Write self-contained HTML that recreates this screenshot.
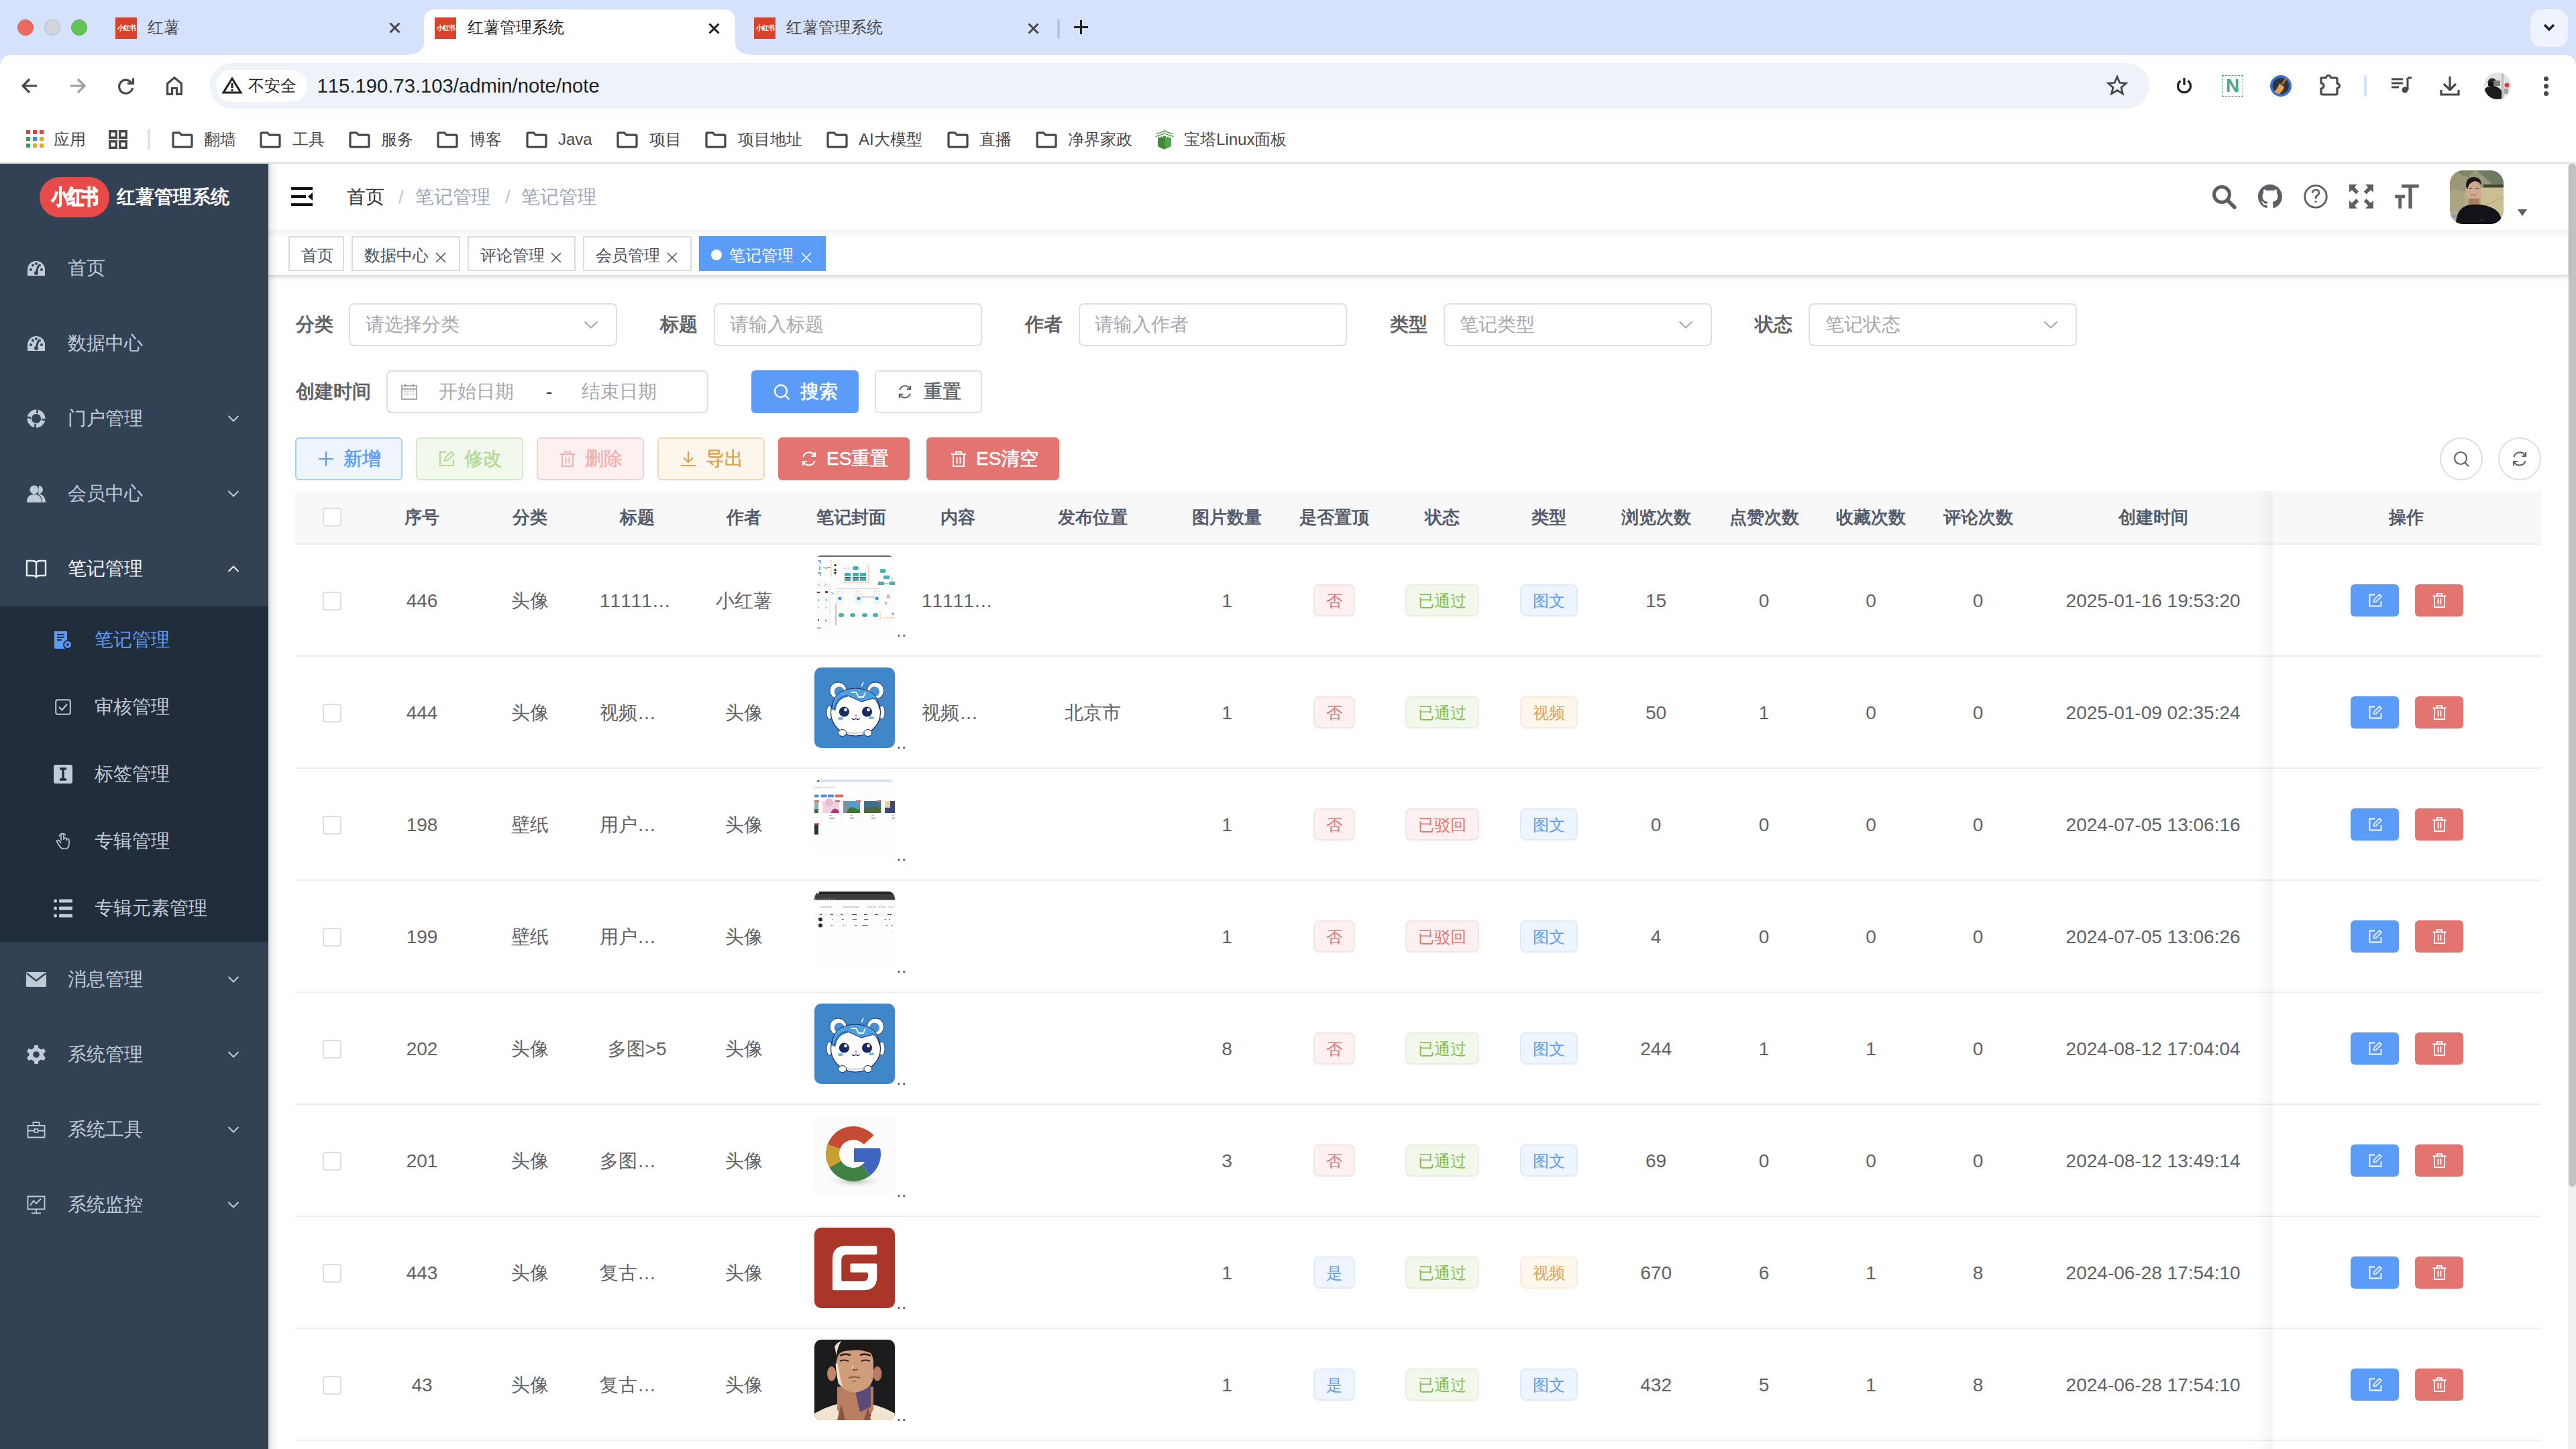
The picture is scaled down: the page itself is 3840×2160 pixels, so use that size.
<!DOCTYPE html><html><head><meta charset="utf-8"><style>
html,body{margin:0;padding:0}
body{width:3840px;height:2160px;overflow:hidden;position:relative;background:#fff;font-family:'Liberation Sans',sans-serif}
.t{position:absolute;white-space:nowrap;font-kerning:none}
.b{position:absolute;box-sizing:border-box}
svg.b{overflow:visible}
</style></head><body>
<div class="b" style="left:0px;top:0px;width:3840px;height:110px;background:#d6e2fb"></div><div class="b" style="left:26px;top:29px;width:24px;height:24px;border-radius:50%;background:#ee6a5f;border:1px solid #d9594f"></div><div class="b" style="left:66px;top:29px;width:24px;height:24px;border-radius:50%;background:#cfd4dd;border:1px solid #b9bec7"></div><div class="b" style="left:106px;top:29px;width:24px;height:24px;border-radius:50%;background:#61c454;border:1px solid #4fae43"></div><div class="b" style="left:172px;top:26px;width:32px;height:32px;background:#d9432b"></div><div class="t" style="left:172px;top:26px;width:32px;height:32px;line-height:32px;text-align:center;font-size:10px;font-weight:700;color:#fff;letter-spacing:-1px">小红书</div><div class="t" style="left:220px;top:5.0px;height:72px;line-height:72px;font-size:24px;color:#474747;font-weight:400;">红薯</div><svg class="b" style="left:579.5px;top:32.5px;" width="17" height="17" viewBox="0 0 17 17"><path d="M1.5 1.5L15.5 15.5M15.5 1.5L1.5 15.5" stroke="#474747" stroke-width="3.0" stroke-linecap="butt"/></svg><svg class="b" style="left:600px;top:14px" width="530" height="68" viewBox="0 0 530 68"><path d="M0 68 Q32 68 32 50 L32 18 Q32 0 50 0 L478 0 Q496 0 496 18 L496 50 Q496 68 528 68 Z" fill="#fff"/></svg><div class="b" style="left:648px;top:26px;width:32px;height:32px;background:#d9432b"></div><div class="t" style="left:648px;top:26px;width:32px;height:32px;line-height:32px;text-align:center;font-size:10px;font-weight:700;color:#fff;letter-spacing:-1px">小红书</div><div class="t" style="left:697px;top:5.0px;height:72px;line-height:72px;font-size:24px;color:#1f1f1f;font-weight:400;">红薯管理系统</div><svg class="b" style="left:1055.5px;top:33.5px;" width="17" height="17" viewBox="0 0 17 17"><path d="M1.5 1.5L15.5 15.5M15.5 1.5L1.5 15.5" stroke="#1f1f1f" stroke-width="3.0" stroke-linecap="butt"/></svg><div class="b" style="left:1124px;top:26px;width:32px;height:32px;background:#d9432b"></div><div class="t" style="left:1124px;top:26px;width:32px;height:32px;line-height:32px;text-align:center;font-size:10px;font-weight:700;color:#fff;letter-spacing:-1px">小红书</div><div class="t" style="left:1172px;top:5.0px;height:72px;line-height:72px;font-size:24px;color:#474747;font-weight:400;">红薯管理系统</div><svg class="b" style="left:1531.5px;top:33.5px;" width="17" height="17" viewBox="0 0 17 17"><path d="M1.5 1.5L15.5 15.5M15.5 1.5L1.5 15.5" stroke="#474747" stroke-width="3.0" stroke-linecap="butt"/></svg><div class="b" style="left:1576px;top:28px;width:4px;height:30px;background:#aec6f6;border-radius:2px"></div><svg class="b" style="left:1601px;top:30px;" width="21" height="21" viewBox="0 0 21 21"><path d="M10.5 0V21M0 10.5H21" stroke="#1f1f1f" stroke-width="3.0"/></svg><div class="b" style="left:3772px;top:14px;width:56px;height:56px;background:#eef3fd;border-radius:16px"></div><svg class="b" style="left:3791px;top:35px;" width="18" height="12" viewBox="0 0 18 12"><path d="M2 2L9 9L16 2" stroke="#1f1f1f" stroke-width="3.4" fill="none"/></svg><div class="b" style="left:0px;top:82px;width:3840px;height:162px;background:#fff;border-radius:16px 16px 0 0"></div><svg class="b" style="left:32px;top:116px;" width="24" height="24" viewBox="0 0 24 24"><path d="M23 12H3M12 2L2 12L12 22" stroke="#474747" stroke-width="3.2" fill="none"/></svg><svg class="b" style="left:104px;top:116px;" width="24" height="24" viewBox="0 0 24 24"><path d="M1 12H21M12 2L22 12L12 22" stroke="#a0a0a0" stroke-width="3.2" fill="none"/></svg><svg class="b" style="left:176px;top:116px;" width="24" height="24" viewBox="0 0 24 24"><path d="M20.5 8.5A10 10 0 1 0 21.5 15" stroke="#474747" stroke-width="3.2" fill="none"/><path d="M14 8.5H22.5V0.5" stroke="#474747" stroke-width="3.2" fill="none"/></svg><svg class="b" style="left:248px;top:114px;" width="24" height="28" viewBox="0 0 24 28"><path d="M1.6 26.4V10.5L12 1.8L22.4 10.5V26.4H15.5V17.5H8.5V26.4Z" stroke="#474747" stroke-width="3.2" fill="none" stroke-linejoin="miter"/></svg><div class="b" style="left:312px;top:94px;width:2892px;height:68px;background:#eef2f9;border-radius:34px"></div><div class="b" style="left:322px;top:104px;width:136px;height:48px;background:#fff;border-radius:24px"></div><svg class="b" style="left:331px;top:115px;" width="30" height="25" viewBox="0 0 30 25"><path d="M15 2L28 23H2Z" stroke="#1f1f1f" stroke-width="3" fill="none" stroke-linejoin="miter"/><path d="M15 9V16" stroke="#1f1f1f" stroke-width="3"/><circle cx="15" cy="19.5" r="1.7" fill="#1f1f1f"/></svg><div class="t" style="left:370px;top:92.0px;height:72px;line-height:72px;font-size:24px;color:#1f1f1f;font-weight:400;">不安全</div><div class="t" style="left:472.5px;top:84.5px;height:87px;line-height:87px;font-size:29.25px;color:#1f1f1f;font-weight:400;">115.190.73.103/admin/note/note</div><svg class="b" style="left:3140px;top:112px;" width="32" height="32" viewBox="0 0 32 32"><path d="M16 2.5L19.8 11.3L29.3 12.1L22.1 18.4L24.3 27.7L16 22.7L7.7 27.7L9.9 18.4L2.7 12.1L12.2 11.3Z" stroke="#474747" stroke-width="2.8" fill="none" stroke-linejoin="miter"/></svg><svg class="b" style="left:3244px;top:115px;" width="24" height="25" viewBox="0 0 24 25"><path d="M6.5 5.5A9.5 9.5 0 1 0 17.5 5.5" stroke="#1f1f1f" stroke-width="3.2" fill="none"/><path d="M12 1V12" stroke="#1f1f1f" stroke-width="3.2"/></svg><div class="b" style="left:3312px;top:112px;width:32px;height:32px;border:1.5px dashed #3f9b7a"></div><div class="t" style="left:3308.0px;width:40px;text-align:center;top:86.0px;height:84px;line-height:84px;font-size:28px;color:#47a882;font-weight:700;">N</div><svg class="b" style="left:3384px;top:112px;" width="32" height="32" viewBox="0 0 32 32"><circle cx="16" cy="16" r="16" fill="#3a6fd9"/><circle cx="16" cy="16" r="12.2" fill="#30343c"/><path d="M23.5 3.5L25.5 5L19 14.5L16.5 13Z" fill="#b8712e"/><path d="M14 12.5L21 17.5Q19 24 13 28.5L6.5 24.5Q10.5 21 14 12.5Z" fill="#e6a54c"/><path d="M9 25L15 19M11 27L17 21" stroke="#c78530" stroke-width="0.8"/></svg><svg class="b" style="left:3455px;top:110px;" width="34" height="34" viewBox="0 0 34 34"><path d="M5 6H12.5A3.5 3.5 0 0 1 19.5 6H27Q29 6 29 8V14.5A3.5 3.5 0 0 1 29 21.5V29Q29 31 27 31H7Q5 31 5 29V22A3 3 0 0 0 5 14Z" stroke="#474747" stroke-width="3.2" fill="none" stroke-linejoin="round"/></svg><div class="b" style="left:3524px;top:112px;width:4px;height:32px;background:#d6e2fb;border-radius:2px"></div><svg class="b" style="left:3564px;top:114px;" width="32" height="28" viewBox="0 0 32 28"><path d="M1 4H18M1 10H18M1 16H12" stroke="#474747" stroke-width="2.8"/><path d="M25 2V20" stroke="#474747" stroke-width="3"/><path d="M25 2H31" stroke="#474747" stroke-width="3"/><circle cx="21" cy="20" r="4.5" fill="#474747"/></svg><svg class="b" style="left:3636px;top:112px;" width="32" height="32" viewBox="0 0 32 32"><path d="M16 2V21M7 13L16 22L25 13" stroke="#474747" stroke-width="3.2" fill="none"/><path d="M3 22V29H29V22" stroke="#474747" stroke-width="3.2" fill="none"/></svg><svg class="b" style="left:3703px;top:108px;" width="40" height="40" viewBox="0 0 40 40"><defs><clipPath id="ca"><circle cx="20" cy="20" r="20"/></clipPath></defs><g clip-path="url(#ca)"><rect width="40" height="40" fill="#e4e2de"/><rect x="26" y="0" width="3" height="40" fill="#bdbab5"/><path d="M0 40V26Q4 20 12 20Q22 20 26 28V40Z" fill="#1c1c1e"/><circle cx="12" cy="15" r="6.5" fill="#2a2624"/><rect x="6" y="15" width="9" height="5" fill="#111"/><rect x="14" y="12" width="10" height="8" rx="1" fill="#7d7f80"/><circle cx="34" cy="19" r="3.5" fill="#e03a3a"/><rect x="30" y="24" width="6" height="8" fill="#a7a3a0"/></g></svg><div class="b" style="left:3792px;top:113.5px;width:7px;height:7px;border-radius:50%;background:#474747"></div><div class="b" style="left:3792px;top:124.5px;width:7px;height:7px;border-radius:50%;background:#474747"></div><div class="b" style="left:3792px;top:135.5px;width:7px;height:7px;border-radius:50%;background:#474747"></div><div class="b" style="left:0px;top:242px;width:3840px;height:2px;background:#e1e1e1"></div><div class="b" style="left:39px;top:194px;width:6px;height:6px;background:#e04335"></div><div class="b" style="left:49px;top:194px;width:6px;height:6px;background:#e04335"></div><div class="b" style="left:59px;top:194px;width:6px;height:6px;background:#e04335"></div><div class="b" style="left:39px;top:204px;width:6px;height:6px;background:#3a9b54"></div><div class="b" style="left:49px;top:204px;width:6px;height:6px;background:#4285f4"></div><div class="b" style="left:59px;top:204px;width:6px;height:6px;background:#e7a531"></div><div class="b" style="left:39px;top:214px;width:6px;height:6px;background:#3a9b54"></div><div class="b" style="left:49px;top:214px;width:6px;height:6px;background:#e7a531"></div><div class="b" style="left:59px;top:214px;width:6px;height:6px;background:#e7a531"></div><div class="t" style="left:80px;top:172.0px;height:72px;line-height:72px;font-size:24px;color:#474747;font-weight:400;">应用</div><svg class="b" style="left:162px;top:194px;" width="28" height="28" viewBox="0 0 28 28"><path d="M1.8 1.8H11.2V11.2H1.8ZM16.8 1.8H26.2V11.2H16.8ZM1.8 16.8H11.2V26.2H1.8ZM16.8 16.8H26.2V26.2H16.8Z" stroke="#474747" stroke-width="3.4" fill="none"/></svg><div class="b" style="left:220px;top:192px;width:4px;height:32px;background:#d6e2fb;border-radius:2px"></div><svg class="b" style="left:256px;top:196px;" width="32" height="25" viewBox="0 0 32 25"><path d="M2 3.5Q2 1.8 3.7 1.8H11.5L14.5 5.2H28.3Q30 5.2 30 6.9V21.5Q30 23.2 28.3 23.2H3.7Q2 23.2 2 21.5Z" stroke="#474747" stroke-width="3.2" fill="none" stroke-linejoin="round"/></svg><div class="t" style="left:304px;top:172.0px;height:72px;line-height:72px;font-size:24px;color:#474747;font-weight:400;">翻墙</div><svg class="b" style="left:387px;top:196px;" width="32" height="25" viewBox="0 0 32 25"><path d="M2 3.5Q2 1.8 3.7 1.8H11.5L14.5 5.2H28.3Q30 5.2 30 6.9V21.5Q30 23.2 28.3 23.2H3.7Q2 23.2 2 21.5Z" stroke="#474747" stroke-width="3.2" fill="none" stroke-linejoin="round"/></svg><div class="t" style="left:436px;top:172.0px;height:72px;line-height:72px;font-size:24px;color:#474747;font-weight:400;">工具</div><svg class="b" style="left:520px;top:196px;" width="32" height="25" viewBox="0 0 32 25"><path d="M2 3.5Q2 1.8 3.7 1.8H11.5L14.5 5.2H28.3Q30 5.2 30 6.9V21.5Q30 23.2 28.3 23.2H3.7Q2 23.2 2 21.5Z" stroke="#474747" stroke-width="3.2" fill="none" stroke-linejoin="round"/></svg><div class="t" style="left:568px;top:172.0px;height:72px;line-height:72px;font-size:24px;color:#474747;font-weight:400;">服务</div><svg class="b" style="left:651px;top:196px;" width="32" height="25" viewBox="0 0 32 25"><path d="M2 3.5Q2 1.8 3.7 1.8H11.5L14.5 5.2H28.3Q30 5.2 30 6.9V21.5Q30 23.2 28.3 23.2H3.7Q2 23.2 2 21.5Z" stroke="#474747" stroke-width="3.2" fill="none" stroke-linejoin="round"/></svg><div class="t" style="left:700px;top:172.0px;height:72px;line-height:72px;font-size:24px;color:#474747;font-weight:400;">博客</div><svg class="b" style="left:784px;top:196px;" width="32" height="25" viewBox="0 0 32 25"><path d="M2 3.5Q2 1.8 3.7 1.8H11.5L14.5 5.2H28.3Q30 5.2 30 6.9V21.5Q30 23.2 28.3 23.2H3.7Q2 23.2 2 21.5Z" stroke="#474747" stroke-width="3.2" fill="none" stroke-linejoin="round"/></svg><div class="t" style="left:832px;top:172.0px;height:72px;line-height:72px;font-size:24px;color:#474747;font-weight:400;">Java</div><svg class="b" style="left:919px;top:196px;" width="32" height="25" viewBox="0 0 32 25"><path d="M2 3.5Q2 1.8 3.7 1.8H11.5L14.5 5.2H28.3Q30 5.2 30 6.9V21.5Q30 23.2 28.3 23.2H3.7Q2 23.2 2 21.5Z" stroke="#474747" stroke-width="3.2" fill="none" stroke-linejoin="round"/></svg><div class="t" style="left:968px;top:172.0px;height:72px;line-height:72px;font-size:24px;color:#474747;font-weight:400;">项目</div><svg class="b" style="left:1051px;top:196px;" width="32" height="25" viewBox="0 0 32 25"><path d="M2 3.5Q2 1.8 3.7 1.8H11.5L14.5 5.2H28.3Q30 5.2 30 6.9V21.5Q30 23.2 28.3 23.2H3.7Q2 23.2 2 21.5Z" stroke="#474747" stroke-width="3.2" fill="none" stroke-linejoin="round"/></svg><div class="t" style="left:1100px;top:172.0px;height:72px;line-height:72px;font-size:24px;color:#474747;font-weight:400;">项目地址</div><svg class="b" style="left:1232px;top:196px;" width="32" height="25" viewBox="0 0 32 25"><path d="M2 3.5Q2 1.8 3.7 1.8H11.5L14.5 5.2H28.3Q30 5.2 30 6.9V21.5Q30 23.2 28.3 23.2H3.7Q2 23.2 2 21.5Z" stroke="#474747" stroke-width="3.2" fill="none" stroke-linejoin="round"/></svg><div class="t" style="left:1280px;top:172.0px;height:72px;line-height:72px;font-size:24px;color:#474747;font-weight:400;">AI大模型</div><svg class="b" style="left:1412px;top:196px;" width="32" height="25" viewBox="0 0 32 25"><path d="M2 3.5Q2 1.8 3.7 1.8H11.5L14.5 5.2H28.3Q30 5.2 30 6.9V21.5Q30 23.2 28.3 23.2H3.7Q2 23.2 2 21.5Z" stroke="#474747" stroke-width="3.2" fill="none" stroke-linejoin="round"/></svg><div class="t" style="left:1460px;top:172.0px;height:72px;line-height:72px;font-size:24px;color:#474747;font-weight:400;">直播</div><svg class="b" style="left:1544px;top:196px;" width="32" height="25" viewBox="0 0 32 25"><path d="M2 3.5Q2 1.8 3.7 1.8H11.5L14.5 5.2H28.3Q30 5.2 30 6.9V21.5Q30 23.2 28.3 23.2H3.7Q2 23.2 2 21.5Z" stroke="#474747" stroke-width="3.2" fill="none" stroke-linejoin="round"/></svg><div class="t" style="left:1592px;top:172.0px;height:72px;line-height:72px;font-size:24px;color:#474747;font-weight:400;">净界家政</div><svg class="b" style="left:1722px;top:192px;" width="28" height="32" viewBox="0 0 28 32"><path d="M4.2 13L6 12.2V13.4H8V11.8H10V12.8H12V10.8H16V12.8H18V11.8H20V13.4H22V12.2L23.9 13V25Q23.9 27.5 14 30.4Q4.2 27.5 4.2 25Z" fill="#52a44a"/><path d="M4.2 13L6 12.2V13.4H8V11.8H10V12.8H12V10.8H14V30.4Q4.2 27.5 4.2 25Z" fill="#3f8636"/><path d="M1.6 7.6L14 3.6L26.4 7.6M0.6 11.6L14 7.2L27.4 11.6M14 1V3.6" stroke="#4a9a42" stroke-width="1.4" fill="none"/></svg><div class="t" style="left:1765px;top:172.0px;height:72px;line-height:72px;font-size:24px;color:#474747;font-weight:400;">宝塔Linux面板</div><div class="b" style="left:0;top:0;width:3840px;height:2160px;z-index:0"><div class="t" style="left:441px;top:442.0px;height:84px;line-height:84px;font-size:28px;color:#606266;font-weight:700;">分类</div><div class="b" style="left:520px;top:452px;width:400px;height:64px;border:2px solid #dddfe5;border-radius:8px;background:#fff"></div><div class="t" style="left:545px;top:442.0px;height:84px;line-height:84px;font-size:28px;color:#a6a9b0;font-weight:400;">请选择分类</div><svg class="b" style="left:870px;top:478px;" width="22" height="12" viewBox="0 0 22 12"><path d="M1.5 1.5L11 10.5L20.5 1.5" stroke="#a6a9b0" stroke-width="2.2" fill="none"/></svg><div class="t" style="left:984px;top:442.0px;height:84px;line-height:84px;font-size:28px;color:#606266;font-weight:700;">标题</div><div class="b" style="left:1064px;top:452px;width:400px;height:64px;border:2px solid #dddfe5;border-radius:8px;background:#fff"></div><div class="t" style="left:1088px;top:442.0px;height:84px;line-height:84px;font-size:28px;color:#a6a9b0;font-weight:400;">请输入标题</div><div class="t" style="left:1528px;top:442.0px;height:84px;line-height:84px;font-size:28px;color:#606266;font-weight:700;">作者</div><div class="b" style="left:1608px;top:452px;width:400px;height:64px;border:2px solid #dddfe5;border-radius:8px;background:#fff"></div><div class="t" style="left:1632px;top:442.0px;height:84px;line-height:84px;font-size:28px;color:#a6a9b0;font-weight:400;">请输入作者</div><div class="t" style="left:2072px;top:442.0px;height:84px;line-height:84px;font-size:28px;color:#606266;font-weight:700;">类型</div><div class="b" style="left:2152px;top:452px;width:400px;height:64px;border:2px solid #dddfe5;border-radius:8px;background:#fff"></div><div class="t" style="left:2176px;top:442.0px;height:84px;line-height:84px;font-size:28px;color:#a6a9b0;font-weight:400;">笔记类型</div><svg class="b" style="left:2502px;top:478px;" width="22" height="12" viewBox="0 0 22 12"><path d="M1.5 1.5L11 10.5L20.5 1.5" stroke="#a6a9b0" stroke-width="2.2" fill="none"/></svg><div class="t" style="left:2616px;top:442.0px;height:84px;line-height:84px;font-size:28px;color:#606266;font-weight:700;">状态</div><div class="b" style="left:2696px;top:452px;width:400px;height:64px;border:2px solid #dddfe5;border-radius:8px;background:#fff"></div><div class="t" style="left:2721px;top:442.0px;height:84px;line-height:84px;font-size:28px;color:#a6a9b0;font-weight:400;">笔记状态</div><svg class="b" style="left:3046px;top:478px;" width="22" height="12" viewBox="0 0 22 12"><path d="M1.5 1.5L11 10.5L20.5 1.5" stroke="#a6a9b0" stroke-width="2.2" fill="none"/></svg><div class="t" style="left:441px;top:542.0px;height:84px;line-height:84px;font-size:28px;color:#606266;font-weight:700;">创建时间</div><div class="b" style="left:576px;top:552px;width:480px;height:64px;border:2px solid #dddfe5;border-radius:8px;background:#fff"></div><svg class="b" style="left:598px;top:572px;" width="24" height="24" viewBox="0 0 24 24"><rect x="1" y="3" width="22" height="20" stroke="#a6a9b0" stroke-width="2" fill="none"/><path d="M1 8H23M6 0V5M18 0V5" stroke="#a6a9b0" stroke-width="2"/><path d="M5 12H7M9 12H11M13 12H15M17 12H19M5 16H7M9 16H11M13 16H15M17 16H19" stroke="#a6a9b0" stroke-width="1.6"/></svg><div class="t" style="left:654px;top:542.0px;height:84px;line-height:84px;font-size:28px;color:#a6a9b0;font-weight:400;">开始日期</div><div class="t" style="left:814px;top:542.0px;height:84px;line-height:84px;font-size:28px;color:#303133;font-weight:400;">-</div><div class="t" style="left:867px;top:542.0px;height:84px;line-height:84px;font-size:28px;color:#a6a9b0;font-weight:400;">结束日期</div><div class="b" style="left:1120px;top:552px;width:160px;height:64px;background:#5a9cf8;border-radius:6px"></div><svg class="b" style="left:1153px;top:572px;" width="25" height="25" viewBox="0 0 25 25"><circle cx="11" cy="11" r="9" stroke="#fff" stroke-width="2.4" fill="none"/><path d="M17.5 17.5L23.5 23.5" stroke="#fff" stroke-width="2.4"/></svg><div class="t" style="left:1193px;top:542.0px;height:84px;line-height:84px;font-size:28px;color:#fff;font-weight:400;-webkit-text-stroke:0.6px #fff">搜索</div><div class="b" style="left:1304px;top:552px;width:160px;height:64px;border:2px solid #dddfe5;border-radius:6px;background:#fff"></div><svg class="b" style="left:1338px;top:573px;" width="22" height="22" viewBox="0 0 24 24"><path d="M3.5 9A9 9 0 0 1 20 7" stroke="#606266" stroke-width="2.2" fill="none"/><path d="M20.5 15A9 9 0 0 1 4 17" stroke="#606266" stroke-width="2.2" fill="none"/><path d="M21 2V8H15" stroke="#606266" stroke-width="2.2" fill="none"/><path d="M3 22V16H9" stroke="#606266" stroke-width="2.2" fill="none"/></svg><div class="t" style="left:1377px;top:542.0px;height:84px;line-height:84px;font-size:28px;color:#606266;font-weight:400;-webkit-text-stroke:0.6px #606266">重置</div><div class="b" style="left:440px;top:652px;width:160px;height:64px;background:#eef5fe;border:2px solid #aacefb;border-radius:6px"></div><svg class="b" style="left:474px;top:672px;" width="24" height="24" viewBox="0 0 24 24"><path d="M12 1V23M1 12H23" stroke="#5a9cf8" stroke-width="2.2"/></svg><div class="t" style="left:512px;top:642.0px;height:84px;line-height:84px;font-size:28px;color:#5a9cf8;font-weight:400;-webkit-text-stroke:0.6px #5a9cf8">新增</div><div class="b" style="left:620px;top:652px;width:160px;height:64px;background:#f2f9ec;border:2px solid #d1ebc4;border-radius:6px"></div><svg class="b" style="left:654px;top:672px;" width="24" height="24" viewBox="0 0 24 24"><path d="M11 2H2V22H22V13" stroke="#b4da99" stroke-width="2.2" fill="none"/><path d="M9 15L10 10L19 1.5L22.5 5L14 14Z" stroke="#b4da99" stroke-width="2" fill="none"/></svg><div class="t" style="left:692px;top:642.0px;height:84px;line-height:84px;font-size:28px;color:#b4da99;font-weight:400;-webkit-text-stroke:0.6px #b4da99">修改</div><div class="b" style="left:800px;top:652px;width:160px;height:64px;background:#fcf0f0;border:2px solid #f5d3d2;border-radius:6px"></div><svg class="b" style="left:834px;top:672px;" width="24" height="24" viewBox="0 0 24 24"><path d="M1 5H23M8 5V1.5H16V5M4 5V23H20V5M9.5 9V19M14.5 9V19" stroke="#efb4b2" stroke-width="2" fill="none"/></svg><div class="t" style="left:872px;top:642.0px;height:84px;line-height:84px;font-size:28px;color:#efb4b2;font-weight:400;-webkit-text-stroke:0.6px #efb4b2">删除</div><div class="b" style="left:980px;top:652px;width:160px;height:64px;background:#fcf6ed;border:2px solid #f0d8b5;border-radius:6px"></div><svg class="b" style="left:1014px;top:672px;" width="24" height="24" viewBox="0 0 24 24"><path d="M12 1V17M5 10L12 17L19 10M1 22H23" stroke="#dca550" stroke-width="2.2" fill="none"/></svg><div class="t" style="left:1052px;top:642.0px;height:84px;line-height:84px;font-size:28px;color:#dca550;font-weight:400;-webkit-text-stroke:0.6px #dca550">导出</div><div class="b" style="left:1160px;top:652px;width:196px;height:64px;background:#e47470;border:2px solid #e47470;border-radius:6px"></div><svg class="b" style="left:1194px;top:672px;" width="24" height="24" viewBox="0 0 24 24"><path d="M3.5 9A9 9 0 0 1 20 7" stroke="#fff" stroke-width="2.2" fill="none"/><path d="M20.5 15A9 9 0 0 1 4 17" stroke="#fff" stroke-width="2.2" fill="none"/><path d="M21 2V8H15" stroke="#fff" stroke-width="2.2" fill="none"/><path d="M3 22V16H9" stroke="#fff" stroke-width="2.2" fill="none"/></svg><div class="t" style="left:1232px;top:642.0px;height:84px;line-height:84px;font-size:28px;color:#fff;font-weight:400;-webkit-text-stroke:0.6px #fff">ES重置</div><div class="b" style="left:1381px;top:652px;width:198px;height:64px;background:#e47470;border:2px solid #e47470;border-radius:6px"></div><svg class="b" style="left:1417px;top:672px;" width="24" height="24" viewBox="0 0 24 24"><path d="M1 5H23M8 5V1.5H16V5M4 5V23H20V5M9.5 9V19M14.5 9V19" stroke="#fff" stroke-width="2" fill="none"/></svg><div class="t" style="left:1455px;top:642.0px;height:84px;line-height:84px;font-size:28px;color:#fff;font-weight:400;-webkit-text-stroke:0.6px #fff">ES清空</div><div class="b" style="left:3637px;top:652px;width:64px;height:64px;border:2px solid #dddfe5;border-radius:50%;background:#fff"></div><svg class="b" style="left:3657px;top:672px;" width="24" height="24" viewBox="0 0 24 24"><circle cx="11" cy="11" r="9" stroke="#606266" stroke-width="2.2" fill="none"/><path d="M17.5 17.5L23 23" stroke="#606266" stroke-width="2.2"/></svg><div class="b" style="left:3724px;top:652px;width:64px;height:64px;border:2px solid #dddfe5;border-radius:50%;background:#fff"></div><svg class="b" style="left:3744px;top:672px;" width="24" height="24" viewBox="0 0 24 24"><path d="M3.5 9A9 9 0 0 1 20 7" stroke="#606266" stroke-width="2.2" fill="none"/><path d="M20.5 15A9 9 0 0 1 4 17" stroke="#606266" stroke-width="2.2" fill="none"/><path d="M21 2V8H15" stroke="#606266" stroke-width="2.2" fill="none"/><path d="M3 22V16H9" stroke="#606266" stroke-width="2.2" fill="none"/></svg><div class="b" style="left:440px;top:732px;width:3348px;height:80px;background:#f8f8f9;border-bottom:2px solid #eceef4"></div><div class="b" style="left:481px;top:757px;width:28px;height:28px;border:2px solid #dddfe5;border-radius:4px;background:#fff"></div><div class="t" style="left:479.0px;width:300px;text-align:center;top:732.0px;height:78px;line-height:78px;font-size:26px;color:#535a6c;font-weight:700;">序号</div><div class="t" style="left:640.0px;width:300px;text-align:center;top:732.0px;height:78px;line-height:78px;font-size:26px;color:#535a6c;font-weight:700;">分类</div><div class="t" style="left:799.6px;width:300px;text-align:center;top:732.0px;height:78px;line-height:78px;font-size:26px;color:#535a6c;font-weight:700;">标题</div><div class="t" style="left:959.0px;width:300px;text-align:center;top:732.0px;height:78px;line-height:78px;font-size:26px;color:#535a6c;font-weight:700;">作者</div><div class="t" style="left:1118.6px;width:300px;text-align:center;top:732.0px;height:78px;line-height:78px;font-size:26px;color:#535a6c;font-weight:700;">笔记封面</div><div class="t" style="left:1278.0px;width:300px;text-align:center;top:732.0px;height:78px;line-height:78px;font-size:26px;color:#535a6c;font-weight:700;">内容</div><div class="t" style="left:1479.0px;width:300px;text-align:center;top:732.0px;height:78px;line-height:78px;font-size:26px;color:#535a6c;font-weight:700;">发布位置</div><div class="t" style="left:1679.0px;width:300px;text-align:center;top:732.0px;height:78px;line-height:78px;font-size:26px;color:#535a6c;font-weight:700;">图片数量</div><div class="t" style="left:1838.6px;width:300px;text-align:center;top:732.0px;height:78px;line-height:78px;font-size:26px;color:#535a6c;font-weight:700;">是否置顶</div><div class="t" style="left:1999.6px;width:300px;text-align:center;top:732.0px;height:78px;line-height:78px;font-size:26px;color:#535a6c;font-weight:700;">状态</div><div class="t" style="left:2159.0px;width:300px;text-align:center;top:732.0px;height:78px;line-height:78px;font-size:26px;color:#535a6c;font-weight:700;">类型</div><div class="t" style="left:2318.6px;width:300px;text-align:center;top:732.0px;height:78px;line-height:78px;font-size:26px;color:#535a6c;font-weight:700;">浏览次数</div><div class="t" style="left:2479.6px;width:300px;text-align:center;top:732.0px;height:78px;line-height:78px;font-size:26px;color:#535a6c;font-weight:700;">点赞次数</div><div class="t" style="left:2639.0px;width:300px;text-align:center;top:732.0px;height:78px;line-height:78px;font-size:26px;color:#535a6c;font-weight:700;">收藏次数</div><div class="t" style="left:2798.6px;width:300px;text-align:center;top:732.0px;height:78px;line-height:78px;font-size:26px;color:#535a6c;font-weight:700;">评论次数</div><div class="t" style="left:3059.6px;width:300px;text-align:center;top:732.0px;height:78px;line-height:78px;font-size:26px;color:#535a6c;font-weight:700;">创建时间</div><div class="t" style="left:3436.6px;width:300px;text-align:center;top:732.0px;height:78px;line-height:78px;font-size:26px;color:#535a6c;font-weight:700;">操作</div><div class="b" style="left:440px;top:977px;width:3348px;height:2px;background:#eceef4"></div><div class="b" style="left:481px;top:882px;width:28px;height:28px;border:2px solid #dddfe5;border-radius:4px;background:#fff"></div><div class="t" style="left:429.0px;width:400px;text-align:center;top:854.0px;height:84px;line-height:84px;font-size:28px;color:#606266;font-weight:400;">446</div><div class="t" style="left:590.0px;width:400px;text-align:center;top:854.0px;height:84px;line-height:84px;font-size:28px;color:#606266;font-weight:400;">头像</div><div class="t" style="left:894px;top:854.0px;height:84px;line-height:84px;font-size:28px;color:#606266;font-weight:400;">11111…</div><div class="t" style="left:909.0px;width:400px;text-align:center;top:854.0px;height:84px;line-height:84px;font-size:28px;color:#606266;font-weight:400;">小红薯</div><svg class="b" style="left:1214px;top:828px" width="120" height="120" viewBox="0 0 120 120"><defs><clipPath id="th1"><rect width="120" height="120" rx="10"/></clipPath></defs><g clip-path="url(#th1)"><rect width="120" height="120" fill="#fdfdfd"/><path d="M4 1H116" stroke="#333" stroke-width="1.6"/><path d="M5 8H9V12M8 16V22M5 26H9V30" stroke="#3a8ee6" stroke-width="1.4" fill="none"/><path d="M25 7V32" stroke="#e8a050" stroke-width="1" stroke-dasharray="2 1.5"/><path d="M31 12L33 16H29Z M31 19L33 23H29Z M29 25H33L31 29Z" fill="#222"/><path d="M12 18H24M16 20L24 17" stroke="#555" stroke-width="0.6"/><path d="M44 19H52" stroke="#9b59f0" stroke-width="0.8" stroke-dasharray="1 1"/><ellipse cx="61.5" cy="19" rx="4.5" ry="3.2" fill="#45b0b0"/><rect x="45" y="26" width="9" height="5" fill="#45b0b0"/><rect x="57" y="26" width="9" height="5" fill="#45b0b0"/><rect x="68" y="26" width="9" height="5" fill="#45b0b0"/><rect x="45" y="32" width="9" height="1.3" fill="#333"/><rect x="57" y="32" width="9" height="1.3" fill="#333"/><rect x="68" y="32" width="9" height="1.3" fill="#333"/><rect x="45" y="33.5" width="9" height="4.5" fill="#45b0b0"/><rect x="57" y="33.5" width="9" height="4.5" fill="#45b0b0"/><rect x="68" y="33.5" width="9" height="4.5" fill="#45b0b0"/><path d="M43 40H81V14" stroke="#e8852a" stroke-width="1" stroke-dasharray="2 1.2" fill="none"/><ellipse cx="102" cy="23" rx="4.5" ry="3.2" fill="#45b0b0"/><rect x="103" y="30" width="9" height="5" fill="#45b0b0"/><rect x="95" y="39" width="9" height="5" fill="#45b0b0"/><rect x="112" y="39" width="8" height="5" fill="#45b0b0"/><path d="M104 41.5H112M116 39V32" stroke="#5ed05e" stroke-width="0.8"/><path d="M32 49.5H99" stroke="#f0b080" stroke-width="0.6"/><path d="M34 53H42V71H34Z M62 53H70V71H62Z M89 53H97V71H89Z" stroke="#7ee07e" stroke-width="0.7" stroke-dasharray="1.5 1" fill="none"/><circle cx="38" cy="64" r="2.6" fill="#3a8ee6"/><circle cx="66" cy="64" r="2.6" fill="#3a8ee6"/><circle cx="93" cy="64" r="2.6" fill="#3a8ee6"/><path d="M70 62H89" stroke="#666" stroke-width="0.5"/><path d="M23 40V104" stroke="#7ee07e" stroke-width="0.7" stroke-dasharray="1.5 1"/><path d="M4 46H22M4 63H22M4 93H22" stroke="#c8f0c8" stroke-width="0.6" stroke-dasharray="1 1"/><path d="M5 42L8 45M8 42L5 45M15 42L18 45M18 42L15 45" stroke="#e8852a" stroke-width="0.9"/><rect x="4" y="54" width="4" height="2" fill="#a02020"/><rect x="16" y="53" width="4" height="3" fill="#b03030"/><path d="M5 65L7 68M17 65L19 68" stroke="#3a8ee6" stroke-width="1.2"/><path d="M6 76V79M17 76V79" stroke="#4aa8e0" stroke-width="0.9"/><rect x="5" y="95" width="2" height="3" fill="#2a6fd0"/><path d="M18 95L16 97L18 99" stroke="#d02070" stroke-width="0.9" fill="none"/><path d="M4 108H10" stroke="#333" stroke-width="0.7"/><path d="M32 72V104M25 55L30 58" stroke="#444" stroke-width="0.6"/><ellipse cx="40" cy="89" rx="4" ry="3" fill="#45b0b0"/><ellipse cx="57" cy="89" rx="4" ry="3" fill="#45b0b0"/><ellipse cx="75" cy="89" rx="4" ry="3" fill="#45b0b0"/><ellipse cx="91" cy="89" rx="4" ry="3" fill="#45b0b0"/><path d="M98 84V96M103 93H120" stroke="#e8852a" stroke-width="0.8" stroke-dasharray="1.5 1"/><circle cx="110" cy="61" r="1.8" stroke="#e03030" stroke-width="0.8" fill="none"/><path d="M105 69L108 73M108 69L105 73" stroke="#3a8ee6" stroke-width="0.9"/><path d="M117 85L119 88H115Z" fill="#2a6fd0"/></g></svg><div class="t" style="left:1336px;top:898.0px;height:84px;line-height:84px;font-size:28px;color:#606266;font-weight:400;">..</div><div class="t" style="left:1374px;top:854.0px;height:84px;line-height:84px;font-size:28px;color:#606266;font-weight:400;">11111…</div><div class="t" style="left:1629.0px;width:400px;text-align:center;top:854.0px;height:84px;line-height:84px;font-size:28px;color:#606266;font-weight:400;">1</div><div class="b" style="left:1957.6px;top:871px;width:62px;height:48px;background:#fcf0f0;border:2px solid #f9e3e2;border-radius:8px"></div><div class="t" style="left:1888.6px;width:200px;text-align:center;top:859.5px;height:72px;line-height:72px;font-size:24px;color:#e47470;font-weight:400;">否</div><div class="b" style="left:2094.6px;top:871px;width:110px;height:48px;background:#f2f9ec;border:2px solid #e4f2da;border-radius:8px"></div><div class="t" style="left:2049.6px;width:200px;text-align:center;top:859.5px;height:72px;line-height:72px;font-size:24px;color:#7ec050;font-weight:400;">已通过</div><div class="b" style="left:2266.0px;top:871px;width:86px;height:48px;background:#eef5fe;border:2px solid #ddebfd;border-radius:8px"></div><div class="t" style="left:2209.0px;width:200px;text-align:center;top:859.5px;height:72px;line-height:72px;font-size:24px;color:#5a9cf8;font-weight:400;">图文</div><div class="t" style="left:2268.6px;width:400px;text-align:center;top:854.0px;height:84px;line-height:84px;font-size:28px;color:#606266;font-weight:400;">15</div><div class="t" style="left:2429.6px;width:400px;text-align:center;top:854.0px;height:84px;line-height:84px;font-size:28px;color:#606266;font-weight:400;">0</div><div class="t" style="left:2589.0px;width:400px;text-align:center;top:854.0px;height:84px;line-height:84px;font-size:28px;color:#606266;font-weight:400;">0</div><div class="t" style="left:2748.6px;width:400px;text-align:center;top:854.0px;height:84px;line-height:84px;font-size:28px;color:#606266;font-weight:400;">0</div><div class="t" style="left:3009.6px;width:400px;text-align:center;top:854.0px;height:84px;line-height:84px;font-size:28px;color:#606266;font-weight:400;">2025-01-16 19:53:20</div><div class="b" style="left:3504px;top:871px;width:72px;height:48px;background:#5a9cf8;border-radius:6px"></div><svg class="b" style="left:3530.5px;top:885px;" width="20" height="20" viewBox="0 0 20 20"><path d="M9 1.5H1.5V18.5H18.5V11" stroke="#fff" stroke-width="1.8" fill="none"/><path d="M7.5 12.5L8 9L16 1L19 4L11 12Z" stroke="#fff" stroke-width="1.6" fill="none" stroke-linejoin="round"/></svg><div class="b" style="left:3600px;top:871px;width:72px;height:48px;background:#e47470;border-radius:6px"></div><svg class="b" style="left:3625.5px;top:883.5px;" width="21" height="22" viewBox="0 0 21 22"><path d="M0.5 4.5H20.5M7 4.5V1H14V4.5M3 4.5V21H18V4.5M8.5 8V17M12.5 8V17" stroke="#fff" stroke-width="1.8" fill="none"/></svg><div class="b" style="left:440px;top:1144px;width:3348px;height:2px;background:#eceef4"></div><div class="b" style="left:481px;top:1049px;width:28px;height:28px;border:2px solid #dddfe5;border-radius:4px;background:#fff"></div><div class="t" style="left:429.0px;width:400px;text-align:center;top:1021.0px;height:84px;line-height:84px;font-size:28px;color:#606266;font-weight:400;">444</div><div class="t" style="left:590.0px;width:400px;text-align:center;top:1021.0px;height:84px;line-height:84px;font-size:28px;color:#606266;font-weight:400;">头像</div><div class="t" style="left:894px;top:1021.0px;height:84px;line-height:84px;font-size:28px;color:#606266;font-weight:400;">视频…</div><div class="t" style="left:909.0px;width:400px;text-align:center;top:1021.0px;height:84px;line-height:84px;font-size:28px;color:#606266;font-weight:400;">头像</div><svg class="b" style="left:1214px;top:995px" width="120" height="120" viewBox="0 0 120 120"><defs><clipPath id="th2"><rect width="120" height="120" rx="10"/></clipPath></defs><g clip-path="url(#th2)"><rect width="120" height="120" fill="#3f87c9"/><circle cx="35.4" cy="34.5" r="12.6" fill="#fff" stroke="#1b2a5e" stroke-width="1"/><circle cx="91" cy="34.5" r="12.6" fill="#fff" stroke="#1b2a5e" stroke-width="1"/><circle cx="37" cy="36" r="7.5" fill="#4a8fd0"/><circle cx="89.5" cy="36" r="7.5" fill="#4a8fd0"/><ellipse cx="22.5" cy="67" rx="4.5" ry="10" fill="#fff" stroke="#1b2a5e" stroke-width="0.8"/><ellipse cx="100.5" cy="67" rx="4.5" ry="10" fill="#fff" stroke="#1b2a5e" stroke-width="0.8"/><ellipse cx="61.5" cy="67" rx="37" ry="35" fill="#fff" stroke="#1b2a5e" stroke-width="1.2"/><path d="M26 62Q27 32 61.5 31Q96 32 97 62Q95 50 88 46L70 51L50 42Q34 46 30 62Z" fill="#4e9ee0" stroke="#1b2a5e" stroke-width="1"/><path d="M30 64Q33 44 50 42" stroke="#2f6fb8" stroke-width="3" fill="none"/><path d="M55 37L62 37L66 44L73 44L76 37" stroke="#fff" stroke-width="1.8" fill="none"/><path d="M70 28L73 22" stroke="#fff" stroke-width="1.5"/><circle cx="44.4" cy="66" r="7.6" fill="#1b2a5e"/><circle cx="78.5" cy="66" r="7.6" fill="#1b2a5e"/><circle cx="46.5" cy="63" r="2.4" fill="#fff"/><circle cx="80.5" cy="63" r="2.4" fill="#fff"/><path d="M59.5 70.5H64.5L62 73.5Z" fill="#e8776c"/><path d="M56 76Q58.5 79 61.8 76Q65 79 67.7 76" stroke="#1b2a5e" stroke-width="1.2" fill="none"/><ellipse cx="39" cy="76" rx="4" ry="2" fill="#6fb3ea"/><ellipse cx="84.8" cy="75" rx="4" ry="2" fill="#6fb3ea"/><path d="M42 94Q61 102 81 94" stroke="#c8d4e4" stroke-width="2" fill="none"/><ellipse cx="41.7" cy="97.5" rx="6" ry="5" fill="#fff" stroke="#1b2a5e" stroke-width="1"/><ellipse cx="79.8" cy="97.5" rx="6" ry="5" fill="#fff" stroke="#1b2a5e" stroke-width="1"/></g></svg><div class="t" style="left:1336px;top:1065.0px;height:84px;line-height:84px;font-size:28px;color:#606266;font-weight:400;">..</div><div class="t" style="left:1374px;top:1021.0px;height:84px;line-height:84px;font-size:28px;color:#606266;font-weight:400;">视频…</div><div class="t" style="left:1429.0px;width:400px;text-align:center;top:1021.0px;height:84px;line-height:84px;font-size:28px;color:#606266;font-weight:400;">北京市</div><div class="t" style="left:1629.0px;width:400px;text-align:center;top:1021.0px;height:84px;line-height:84px;font-size:28px;color:#606266;font-weight:400;">1</div><div class="b" style="left:1957.6px;top:1038px;width:62px;height:48px;background:#fcf0f0;border:2px solid #f9e3e2;border-radius:8px"></div><div class="t" style="left:1888.6px;width:200px;text-align:center;top:1026.5px;height:72px;line-height:72px;font-size:24px;color:#e47470;font-weight:400;">否</div><div class="b" style="left:2094.6px;top:1038px;width:110px;height:48px;background:#f2f9ec;border:2px solid #e4f2da;border-radius:8px"></div><div class="t" style="left:2049.6px;width:200px;text-align:center;top:1026.5px;height:72px;line-height:72px;font-size:24px;color:#7ec050;font-weight:400;">已通过</div><div class="b" style="left:2266.0px;top:1038px;width:86px;height:48px;background:#fcf6ed;border:2px solid #f8ecda;border-radius:8px"></div><div class="t" style="left:2209.0px;width:200px;text-align:center;top:1026.5px;height:72px;line-height:72px;font-size:24px;color:#dca550;font-weight:400;">视频</div><div class="t" style="left:2268.6px;width:400px;text-align:center;top:1021.0px;height:84px;line-height:84px;font-size:28px;color:#606266;font-weight:400;">50</div><div class="t" style="left:2429.6px;width:400px;text-align:center;top:1021.0px;height:84px;line-height:84px;font-size:28px;color:#606266;font-weight:400;">1</div><div class="t" style="left:2589.0px;width:400px;text-align:center;top:1021.0px;height:84px;line-height:84px;font-size:28px;color:#606266;font-weight:400;">0</div><div class="t" style="left:2748.6px;width:400px;text-align:center;top:1021.0px;height:84px;line-height:84px;font-size:28px;color:#606266;font-weight:400;">0</div><div class="t" style="left:3009.6px;width:400px;text-align:center;top:1021.0px;height:84px;line-height:84px;font-size:28px;color:#606266;font-weight:400;">2025-01-09 02:35:24</div><div class="b" style="left:3504px;top:1038px;width:72px;height:48px;background:#5a9cf8;border-radius:6px"></div><svg class="b" style="left:3530.5px;top:1052px;" width="20" height="20" viewBox="0 0 20 20"><path d="M9 1.5H1.5V18.5H18.5V11" stroke="#fff" stroke-width="1.8" fill="none"/><path d="M7.5 12.5L8 9L16 1L19 4L11 12Z" stroke="#fff" stroke-width="1.6" fill="none" stroke-linejoin="round"/></svg><div class="b" style="left:3600px;top:1038px;width:72px;height:48px;background:#e47470;border-radius:6px"></div><svg class="b" style="left:3625.5px;top:1050.5px;" width="21" height="22" viewBox="0 0 21 22"><path d="M0.5 4.5H20.5M7 4.5V1H14V4.5M3 4.5V21H18V4.5M8.5 8V17M12.5 8V17" stroke="#fff" stroke-width="1.8" fill="none"/></svg><div class="b" style="left:440px;top:1311px;width:3348px;height:2px;background:#eceef4"></div><div class="b" style="left:481px;top:1216px;width:28px;height:28px;border:2px solid #dddfe5;border-radius:4px;background:#fff"></div><div class="t" style="left:429.0px;width:400px;text-align:center;top:1188.0px;height:84px;line-height:84px;font-size:28px;color:#606266;font-weight:400;">198</div><div class="t" style="left:590.0px;width:400px;text-align:center;top:1188.0px;height:84px;line-height:84px;font-size:28px;color:#606266;font-weight:400;">壁纸</div><div class="t" style="left:894px;top:1188.0px;height:84px;line-height:84px;font-size:28px;color:#606266;font-weight:400;">用户…</div><div class="t" style="left:909.0px;width:400px;text-align:center;top:1188.0px;height:84px;line-height:84px;font-size:28px;color:#606266;font-weight:400;">头像</div><svg class="b" style="left:1214px;top:1162px" width="120" height="120" viewBox="0 0 120 120"><defs><clipPath id="th3"><rect width="120" height="120" rx="10"/></clipPath></defs><g clip-path="url(#th3)"><rect width="120" height="120" fill="#fefefe"/><rect width="120" height="4" fill="#d3e0f7"/><rect x="4" y="1" width="3" height="2" fill="#333"/><path d="M0 11.7H31" stroke="#555" stroke-width="0.9" stroke-dasharray="1 2.5"/><rect x="0" y="22.5" width="6.5" height="3.9" fill="#4a90e2"/><rect x="10" y="22.5" width="8.6" height="3.9" fill="#4a90e2"/><rect x="20" y="22.5" width="8.8" height="3.9" fill="#4a90e2"/><rect x="31" y="22.5" width="12" height="3.9" fill="#e06660"/><rect x="10" y="30" width="29" height="32" fill="#fff" stroke="#f0f0f0" stroke-width="0.5"/><rect x="41" y="30" width="29" height="32" fill="#fff" stroke="#f0f0f0" stroke-width="0.5"/><rect x="72" y="30" width="29" height="32" fill="#fff" stroke="#f0f0f0" stroke-width="0.5"/><rect x="103" y="30" width="17" height="32" fill="#fff" stroke="#f0f0f0" stroke-width="0.5"/><rect x="0" y="32" width="6" height="18" fill="#8fb0c8"/><rect x="0" y="44" width="6" height="6" fill="#3c6e3c"/><rect x="0" y="31" width="7" height="2.5" fill="#e06660"/><rect x="12" y="32" width="25" height="18" fill="#f1d3e0"/><circle cx="22" cy="34" r="6" fill="#e9bcd0"/><path d="M24 50Q28 42 33 44Q37 46 37 50Z" fill="#c0306a"/><rect x="31" y="31" width="7" height="2.5" fill="#e06660"/><rect x="43" y="32" width="25" height="18" fill="#5a9ad6"/><rect x="43" y="32" width="8" height="18" fill="#7c8fa8"/><path d="M48 50Q52 38 60 42Q64 46 68 44V50Z" fill="#3a7a30"/><rect x="62" y="31" width="7" height="2.5" fill="#e06660"/><rect x="74" y="32" width="25" height="18" fill="#3f7090"/><path d="M74 44Q86 38 99 42V50H74Z" fill="#4a6a3a"/><rect x="93" y="31" width="7" height="2.5" fill="#e06660"/><rect x="105" y="32" width="15" height="18" fill="#3a4a80"/><rect x="105" y="32" width="8" height="10" fill="#e8d0a0"/><path d="M22 53.5H26M53 53.5H57M85 53.5H89M115 53.5H119" stroke="#aaa" stroke-width="0.8"/><path d="M22.5 57.5H27M53 57.5H56M85 57.5H88M116 57.5H120" stroke="#4a90e2" stroke-width="1.6"/><path d="M27 57.5H30M56 57.5H59M88 57.5H91" stroke="#e06660" stroke-width="1.6"/><rect x="0" y="64" width="8" height="34" fill="#fff" stroke="#f0f0f0" stroke-width="0.5"/><rect x="0" y="65" width="6" height="17" fill="#2a3040"/><rect x="0" y="65" width="7" height="2" fill="#e06660"/></g></svg><div class="t" style="left:1336px;top:1232.0px;height:84px;line-height:84px;font-size:28px;color:#606266;font-weight:400;">..</div><div class="t" style="left:1629.0px;width:400px;text-align:center;top:1188.0px;height:84px;line-height:84px;font-size:28px;color:#606266;font-weight:400;">1</div><div class="b" style="left:1957.6px;top:1205px;width:62px;height:48px;background:#fcf0f0;border:2px solid #f9e3e2;border-radius:8px"></div><div class="t" style="left:1888.6px;width:200px;text-align:center;top:1193.5px;height:72px;line-height:72px;font-size:24px;color:#e47470;font-weight:400;">否</div><div class="b" style="left:2094.6px;top:1205px;width:110px;height:48px;background:#fcf0f0;border:2px solid #f9e3e2;border-radius:8px"></div><div class="t" style="left:2049.6px;width:200px;text-align:center;top:1193.5px;height:72px;line-height:72px;font-size:24px;color:#e47470;font-weight:400;">已驳回</div><div class="b" style="left:2266.0px;top:1205px;width:86px;height:48px;background:#eef5fe;border:2px solid #ddebfd;border-radius:8px"></div><div class="t" style="left:2209.0px;width:200px;text-align:center;top:1193.5px;height:72px;line-height:72px;font-size:24px;color:#5a9cf8;font-weight:400;">图文</div><div class="t" style="left:2268.6px;width:400px;text-align:center;top:1188.0px;height:84px;line-height:84px;font-size:28px;color:#606266;font-weight:400;">0</div><div class="t" style="left:2429.6px;width:400px;text-align:center;top:1188.0px;height:84px;line-height:84px;font-size:28px;color:#606266;font-weight:400;">0</div><div class="t" style="left:2589.0px;width:400px;text-align:center;top:1188.0px;height:84px;line-height:84px;font-size:28px;color:#606266;font-weight:400;">0</div><div class="t" style="left:2748.6px;width:400px;text-align:center;top:1188.0px;height:84px;line-height:84px;font-size:28px;color:#606266;font-weight:400;">0</div><div class="t" style="left:3009.6px;width:400px;text-align:center;top:1188.0px;height:84px;line-height:84px;font-size:28px;color:#606266;font-weight:400;">2024-07-05 13:06:16</div><div class="b" style="left:3504px;top:1205px;width:72px;height:48px;background:#5a9cf8;border-radius:6px"></div><svg class="b" style="left:3530.5px;top:1219px;" width="20" height="20" viewBox="0 0 20 20"><path d="M9 1.5H1.5V18.5H18.5V11" stroke="#fff" stroke-width="1.8" fill="none"/><path d="M7.5 12.5L8 9L16 1L19 4L11 12Z" stroke="#fff" stroke-width="1.6" fill="none" stroke-linejoin="round"/></svg><div class="b" style="left:3600px;top:1205px;width:72px;height:48px;background:#e47470;border-radius:6px"></div><svg class="b" style="left:3625.5px;top:1217.5px;" width="21" height="22" viewBox="0 0 21 22"><path d="M0.5 4.5H20.5M7 4.5V1H14V4.5M3 4.5V21H18V4.5M8.5 8V17M12.5 8V17" stroke="#fff" stroke-width="1.8" fill="none"/></svg><div class="b" style="left:440px;top:1478px;width:3348px;height:2px;background:#eceef4"></div><div class="b" style="left:481px;top:1383px;width:28px;height:28px;border:2px solid #dddfe5;border-radius:4px;background:#fff"></div><div class="t" style="left:429.0px;width:400px;text-align:center;top:1355.0px;height:84px;line-height:84px;font-size:28px;color:#606266;font-weight:400;">199</div><div class="t" style="left:590.0px;width:400px;text-align:center;top:1355.0px;height:84px;line-height:84px;font-size:28px;color:#606266;font-weight:400;">壁纸</div><div class="t" style="left:894px;top:1355.0px;height:84px;line-height:84px;font-size:28px;color:#606266;font-weight:400;">用户…</div><div class="t" style="left:909.0px;width:400px;text-align:center;top:1355.0px;height:84px;line-height:84px;font-size:28px;color:#606266;font-weight:400;">头像</div><svg class="b" style="left:1214px;top:1329px" width="120" height="120" viewBox="0 0 120 120"><defs><clipPath id="th4"><rect width="120" height="120" rx="10"/></clipPath></defs><g clip-path="url(#th4)"><rect width="120" height="120" fill="#fefefe"/><rect width="120" height="12.6" fill="#3d3d3d"/><rect width="120" height="4" fill="#222"/><rect x="4" y="1" width="3" height="2" fill="#eee"/><path d="M1 11H31" stroke="#ccc" stroke-width="0.9" stroke-dasharray="1 2.5"/><path d="M9 23H27M43 23H66M78 23H90M91 22V25M96 23H106M111 23H118" stroke="#888" stroke-width="1" stroke-dasharray="2 1"/><rect x="0" y="32" width="120" height="5" fill="#f4f4f4"/><path d="M8 34.5H11M24 34.5H28M39 34.5H42M56 34.5H63M74 34.5H79M90 34.5H95M109 34.5H115" stroke="#334" stroke-width="1.1"/><circle cx="9" cy="41.5" r="3" fill="#302a30"/><circle cx="9" cy="50.5" r="3" fill="#302a30"/><path d="M6 42L8 44M11 42L12 44" stroke="#c87a40" stroke-width="0.8"/><path d="M26 41.5H27M41 41.5H44M57 41.5H63M74 41.5H80M105 41.5H107M111 41.5H113" stroke="#666" stroke-width="1"/><path d="M57 41.5H63" stroke="#3a7ae0" stroke-width="1" stroke-dasharray="1 1"/><path d="M25 50.5H27M43 50.5H44M60 50.5H63M71 50.5H80M107 50.5H109M115 50.5H117" stroke="#777" stroke-width="1"/><path d="M60 50.5H63" stroke="#3a7ae0" stroke-width="1" stroke-dasharray="1 1"/><circle cx="118" cy="61" r="0.6" fill="#666"/></g></svg><div class="t" style="left:1336px;top:1399.0px;height:84px;line-height:84px;font-size:28px;color:#606266;font-weight:400;">..</div><div class="t" style="left:1629.0px;width:400px;text-align:center;top:1355.0px;height:84px;line-height:84px;font-size:28px;color:#606266;font-weight:400;">1</div><div class="b" style="left:1957.6px;top:1372px;width:62px;height:48px;background:#fcf0f0;border:2px solid #f9e3e2;border-radius:8px"></div><div class="t" style="left:1888.6px;width:200px;text-align:center;top:1360.5px;height:72px;line-height:72px;font-size:24px;color:#e47470;font-weight:400;">否</div><div class="b" style="left:2094.6px;top:1372px;width:110px;height:48px;background:#fcf0f0;border:2px solid #f9e3e2;border-radius:8px"></div><div class="t" style="left:2049.6px;width:200px;text-align:center;top:1360.5px;height:72px;line-height:72px;font-size:24px;color:#e47470;font-weight:400;">已驳回</div><div class="b" style="left:2266.0px;top:1372px;width:86px;height:48px;background:#eef5fe;border:2px solid #ddebfd;border-radius:8px"></div><div class="t" style="left:2209.0px;width:200px;text-align:center;top:1360.5px;height:72px;line-height:72px;font-size:24px;color:#5a9cf8;font-weight:400;">图文</div><div class="t" style="left:2268.6px;width:400px;text-align:center;top:1355.0px;height:84px;line-height:84px;font-size:28px;color:#606266;font-weight:400;">4</div><div class="t" style="left:2429.6px;width:400px;text-align:center;top:1355.0px;height:84px;line-height:84px;font-size:28px;color:#606266;font-weight:400;">0</div><div class="t" style="left:2589.0px;width:400px;text-align:center;top:1355.0px;height:84px;line-height:84px;font-size:28px;color:#606266;font-weight:400;">0</div><div class="t" style="left:2748.6px;width:400px;text-align:center;top:1355.0px;height:84px;line-height:84px;font-size:28px;color:#606266;font-weight:400;">0</div><div class="t" style="left:3009.6px;width:400px;text-align:center;top:1355.0px;height:84px;line-height:84px;font-size:28px;color:#606266;font-weight:400;">2024-07-05 13:06:26</div><div class="b" style="left:3504px;top:1372px;width:72px;height:48px;background:#5a9cf8;border-radius:6px"></div><svg class="b" style="left:3530.5px;top:1386px;" width="20" height="20" viewBox="0 0 20 20"><path d="M9 1.5H1.5V18.5H18.5V11" stroke="#fff" stroke-width="1.8" fill="none"/><path d="M7.5 12.5L8 9L16 1L19 4L11 12Z" stroke="#fff" stroke-width="1.6" fill="none" stroke-linejoin="round"/></svg><div class="b" style="left:3600px;top:1372px;width:72px;height:48px;background:#e47470;border-radius:6px"></div><svg class="b" style="left:3625.5px;top:1384.5px;" width="21" height="22" viewBox="0 0 21 22"><path d="M0.5 4.5H20.5M7 4.5V1H14V4.5M3 4.5V21H18V4.5M8.5 8V17M12.5 8V17" stroke="#fff" stroke-width="1.8" fill="none"/></svg><div class="b" style="left:440px;top:1645px;width:3348px;height:2px;background:#eceef4"></div><div class="b" style="left:481px;top:1550px;width:28px;height:28px;border:2px solid #dddfe5;border-radius:4px;background:#fff"></div><div class="t" style="left:429.0px;width:400px;text-align:center;top:1522.0px;height:84px;line-height:84px;font-size:28px;color:#606266;font-weight:400;">202</div><div class="t" style="left:590.0px;width:400px;text-align:center;top:1522.0px;height:84px;line-height:84px;font-size:28px;color:#606266;font-weight:400;">头像</div><div class="t" style="left:749.6px;width:400px;text-align:center;top:1522.0px;height:84px;line-height:84px;font-size:28px;color:#606266;font-weight:400;">多图>5</div><div class="t" style="left:909.0px;width:400px;text-align:center;top:1522.0px;height:84px;line-height:84px;font-size:28px;color:#606266;font-weight:400;">头像</div><svg class="b" style="left:1214px;top:1496px" width="120" height="120" viewBox="0 0 120 120"><defs><clipPath id="th5"><rect width="120" height="120" rx="10"/></clipPath></defs><g clip-path="url(#th5)"><rect width="120" height="120" fill="#3f87c9"/><circle cx="35.4" cy="34.5" r="12.6" fill="#fff" stroke="#1b2a5e" stroke-width="1"/><circle cx="91" cy="34.5" r="12.6" fill="#fff" stroke="#1b2a5e" stroke-width="1"/><circle cx="37" cy="36" r="7.5" fill="#4a8fd0"/><circle cx="89.5" cy="36" r="7.5" fill="#4a8fd0"/><ellipse cx="22.5" cy="67" rx="4.5" ry="10" fill="#fff" stroke="#1b2a5e" stroke-width="0.8"/><ellipse cx="100.5" cy="67" rx="4.5" ry="10" fill="#fff" stroke="#1b2a5e" stroke-width="0.8"/><ellipse cx="61.5" cy="67" rx="37" ry="35" fill="#fff" stroke="#1b2a5e" stroke-width="1.2"/><path d="M26 62Q27 32 61.5 31Q96 32 97 62Q95 50 88 46L70 51L50 42Q34 46 30 62Z" fill="#4e9ee0" stroke="#1b2a5e" stroke-width="1"/><path d="M30 64Q33 44 50 42" stroke="#2f6fb8" stroke-width="3" fill="none"/><path d="M55 37L62 37L66 44L73 44L76 37" stroke="#fff" stroke-width="1.8" fill="none"/><path d="M70 28L73 22" stroke="#fff" stroke-width="1.5"/><circle cx="44.4" cy="66" r="7.6" fill="#1b2a5e"/><circle cx="78.5" cy="66" r="7.6" fill="#1b2a5e"/><circle cx="46.5" cy="63" r="2.4" fill="#fff"/><circle cx="80.5" cy="63" r="2.4" fill="#fff"/><path d="M59.5 70.5H64.5L62 73.5Z" fill="#e8776c"/><path d="M56 76Q58.5 79 61.8 76Q65 79 67.7 76" stroke="#1b2a5e" stroke-width="1.2" fill="none"/><ellipse cx="39" cy="76" rx="4" ry="2" fill="#6fb3ea"/><ellipse cx="84.8" cy="75" rx="4" ry="2" fill="#6fb3ea"/><path d="M42 94Q61 102 81 94" stroke="#c8d4e4" stroke-width="2" fill="none"/><ellipse cx="41.7" cy="97.5" rx="6" ry="5" fill="#fff" stroke="#1b2a5e" stroke-width="1"/><ellipse cx="79.8" cy="97.5" rx="6" ry="5" fill="#fff" stroke="#1b2a5e" stroke-width="1"/></g></svg><div class="t" style="left:1336px;top:1566.0px;height:84px;line-height:84px;font-size:28px;color:#606266;font-weight:400;">..</div><div class="t" style="left:1629.0px;width:400px;text-align:center;top:1522.0px;height:84px;line-height:84px;font-size:28px;color:#606266;font-weight:400;">8</div><div class="b" style="left:1957.6px;top:1539px;width:62px;height:48px;background:#fcf0f0;border:2px solid #f9e3e2;border-radius:8px"></div><div class="t" style="left:1888.6px;width:200px;text-align:center;top:1527.5px;height:72px;line-height:72px;font-size:24px;color:#e47470;font-weight:400;">否</div><div class="b" style="left:2094.6px;top:1539px;width:110px;height:48px;background:#f2f9ec;border:2px solid #e4f2da;border-radius:8px"></div><div class="t" style="left:2049.6px;width:200px;text-align:center;top:1527.5px;height:72px;line-height:72px;font-size:24px;color:#7ec050;font-weight:400;">已通过</div><div class="b" style="left:2266.0px;top:1539px;width:86px;height:48px;background:#eef5fe;border:2px solid #ddebfd;border-radius:8px"></div><div class="t" style="left:2209.0px;width:200px;text-align:center;top:1527.5px;height:72px;line-height:72px;font-size:24px;color:#5a9cf8;font-weight:400;">图文</div><div class="t" style="left:2268.6px;width:400px;text-align:center;top:1522.0px;height:84px;line-height:84px;font-size:28px;color:#606266;font-weight:400;">244</div><div class="t" style="left:2429.6px;width:400px;text-align:center;top:1522.0px;height:84px;line-height:84px;font-size:28px;color:#606266;font-weight:400;">1</div><div class="t" style="left:2589.0px;width:400px;text-align:center;top:1522.0px;height:84px;line-height:84px;font-size:28px;color:#606266;font-weight:400;">1</div><div class="t" style="left:2748.6px;width:400px;text-align:center;top:1522.0px;height:84px;line-height:84px;font-size:28px;color:#606266;font-weight:400;">0</div><div class="t" style="left:3009.6px;width:400px;text-align:center;top:1522.0px;height:84px;line-height:84px;font-size:28px;color:#606266;font-weight:400;">2024-08-12 17:04:04</div><div class="b" style="left:3504px;top:1539px;width:72px;height:48px;background:#5a9cf8;border-radius:6px"></div><svg class="b" style="left:3530.5px;top:1553px;" width="20" height="20" viewBox="0 0 20 20"><path d="M9 1.5H1.5V18.5H18.5V11" stroke="#fff" stroke-width="1.8" fill="none"/><path d="M7.5 12.5L8 9L16 1L19 4L11 12Z" stroke="#fff" stroke-width="1.6" fill="none" stroke-linejoin="round"/></svg><div class="b" style="left:3600px;top:1539px;width:72px;height:48px;background:#e47470;border-radius:6px"></div><svg class="b" style="left:3625.5px;top:1551.5px;" width="21" height="22" viewBox="0 0 21 22"><path d="M0.5 4.5H20.5M7 4.5V1H14V4.5M3 4.5V21H18V4.5M8.5 8V17M12.5 8V17" stroke="#fff" stroke-width="1.8" fill="none"/></svg><div class="b" style="left:440px;top:1812px;width:3348px;height:2px;background:#eceef4"></div><div class="b" style="left:481px;top:1717px;width:28px;height:28px;border:2px solid #dddfe5;border-radius:4px;background:#fff"></div><div class="t" style="left:429.0px;width:400px;text-align:center;top:1689.0px;height:84px;line-height:84px;font-size:28px;color:#606266;font-weight:400;">201</div><div class="t" style="left:590.0px;width:400px;text-align:center;top:1689.0px;height:84px;line-height:84px;font-size:28px;color:#606266;font-weight:400;">头像</div><div class="t" style="left:894px;top:1689.0px;height:84px;line-height:84px;font-size:28px;color:#606266;font-weight:400;">多图…</div><div class="t" style="left:909.0px;width:400px;text-align:center;top:1689.0px;height:84px;line-height:84px;font-size:28px;color:#606266;font-weight:400;">头像</div><svg class="b" style="left:1214px;top:1663px" width="120" height="120" viewBox="0 0 120 120"><defs><clipPath id="th6"><rect width="120" height="120" rx="10"/></clipPath></defs><g clip-path="url(#th6)"><defs><radialGradient id="gsh"><stop offset="0" stop-color="#b8b8b8"/><stop offset="1" stop-color="#fcfcfc" stop-opacity="0"/></radialGradient></defs><rect width="120" height="120" fill="#fcfcfc"/><ellipse cx="60" cy="98" rx="48" ry="10" fill="url(#gsh)"/><path d="M19.5 43A41 41 0 0 1 88.5 29.6L73.6 43A21 21 0 0 0 38.3 49.8Z" fill="#c44c33"/><path d="M22.5 77.5A41 41 0 0 1 19.5 43L38.3 49.8A21 21 0 0 0 39.8 67.5Z" fill="#c9a030"/><path d="M83.2 89.3A41 41 0 0 1 22.5 77.5L39.8 67.5A21 21 0 0 0 70.9 73.5Z" fill="#3f8244"/><path d="M83.2 89.3A41 41 0 0 0 98.1 48.4H59V69H75.2A21 21 0 0 1 70.9 73.5Z" fill="#3d66c0"/></g></svg><div class="t" style="left:1336px;top:1733.0px;height:84px;line-height:84px;font-size:28px;color:#606266;font-weight:400;">..</div><div class="t" style="left:1629.0px;width:400px;text-align:center;top:1689.0px;height:84px;line-height:84px;font-size:28px;color:#606266;font-weight:400;">3</div><div class="b" style="left:1957.6px;top:1706px;width:62px;height:48px;background:#fcf0f0;border:2px solid #f9e3e2;border-radius:8px"></div><div class="t" style="left:1888.6px;width:200px;text-align:center;top:1694.5px;height:72px;line-height:72px;font-size:24px;color:#e47470;font-weight:400;">否</div><div class="b" style="left:2094.6px;top:1706px;width:110px;height:48px;background:#f2f9ec;border:2px solid #e4f2da;border-radius:8px"></div><div class="t" style="left:2049.6px;width:200px;text-align:center;top:1694.5px;height:72px;line-height:72px;font-size:24px;color:#7ec050;font-weight:400;">已通过</div><div class="b" style="left:2266.0px;top:1706px;width:86px;height:48px;background:#eef5fe;border:2px solid #ddebfd;border-radius:8px"></div><div class="t" style="left:2209.0px;width:200px;text-align:center;top:1694.5px;height:72px;line-height:72px;font-size:24px;color:#5a9cf8;font-weight:400;">图文</div><div class="t" style="left:2268.6px;width:400px;text-align:center;top:1689.0px;height:84px;line-height:84px;font-size:28px;color:#606266;font-weight:400;">69</div><div class="t" style="left:2429.6px;width:400px;text-align:center;top:1689.0px;height:84px;line-height:84px;font-size:28px;color:#606266;font-weight:400;">0</div><div class="t" style="left:2589.0px;width:400px;text-align:center;top:1689.0px;height:84px;line-height:84px;font-size:28px;color:#606266;font-weight:400;">0</div><div class="t" style="left:2748.6px;width:400px;text-align:center;top:1689.0px;height:84px;line-height:84px;font-size:28px;color:#606266;font-weight:400;">0</div><div class="t" style="left:3009.6px;width:400px;text-align:center;top:1689.0px;height:84px;line-height:84px;font-size:28px;color:#606266;font-weight:400;">2024-08-12 13:49:14</div><div class="b" style="left:3504px;top:1706px;width:72px;height:48px;background:#5a9cf8;border-radius:6px"></div><svg class="b" style="left:3530.5px;top:1720px;" width="20" height="20" viewBox="0 0 20 20"><path d="M9 1.5H1.5V18.5H18.5V11" stroke="#fff" stroke-width="1.8" fill="none"/><path d="M7.5 12.5L8 9L16 1L19 4L11 12Z" stroke="#fff" stroke-width="1.6" fill="none" stroke-linejoin="round"/></svg><div class="b" style="left:3600px;top:1706px;width:72px;height:48px;background:#e47470;border-radius:6px"></div><svg class="b" style="left:3625.5px;top:1718.5px;" width="21" height="22" viewBox="0 0 21 22"><path d="M0.5 4.5H20.5M7 4.5V1H14V4.5M3 4.5V21H18V4.5M8.5 8V17M12.5 8V17" stroke="#fff" stroke-width="1.8" fill="none"/></svg><div class="b" style="left:440px;top:1979px;width:3348px;height:2px;background:#eceef4"></div><div class="b" style="left:481px;top:1884px;width:28px;height:28px;border:2px solid #dddfe5;border-radius:4px;background:#fff"></div><div class="t" style="left:429.0px;width:400px;text-align:center;top:1856.0px;height:84px;line-height:84px;font-size:28px;color:#606266;font-weight:400;">443</div><div class="t" style="left:590.0px;width:400px;text-align:center;top:1856.0px;height:84px;line-height:84px;font-size:28px;color:#606266;font-weight:400;">头像</div><div class="t" style="left:894px;top:1856.0px;height:84px;line-height:84px;font-size:28px;color:#606266;font-weight:400;">复古…</div><div class="t" style="left:909.0px;width:400px;text-align:center;top:1856.0px;height:84px;line-height:84px;font-size:28px;color:#606266;font-weight:400;">头像</div><svg class="b" style="left:1214px;top:1830px" width="120" height="120" viewBox="0 0 120 120"><defs><clipPath id="th7"><rect width="120" height="120" rx="10"/></clipPath></defs><g clip-path="url(#th7)"><rect width="120" height="120" fill="#aa3529"/><path d="M46.9 26.9H91.3Q93.3 26.9 93.3 28.9V38.2Q93.3 40.2 91.3 40.2H48.3Q40.3 40.2 40.3 48.2V78Q40.3 80 42.3 80H72Q80 80 80 72V68.8Q80 66.8 78 66.8H55.4Q53.4 66.8 53.4 64.8V55.4Q53.4 53.4 55.4 53.4H91.3Q93.3 53.4 93.3 55.4V73.3Q93.3 93.3 73.3 93.3H28.9Q26.9 93.3 26.9 91.3V46.9Q26.9 26.9 46.9 26.9Z" fill="#fff"/></g></svg><div class="t" style="left:1336px;top:1900.0px;height:84px;line-height:84px;font-size:28px;color:#606266;font-weight:400;">..</div><div class="t" style="left:1629.0px;width:400px;text-align:center;top:1856.0px;height:84px;line-height:84px;font-size:28px;color:#606266;font-weight:400;">1</div><div class="b" style="left:1957.6px;top:1873px;width:62px;height:48px;background:#eef5fe;border:2px solid #ddebfd;border-radius:8px"></div><div class="t" style="left:1888.6px;width:200px;text-align:center;top:1861.5px;height:72px;line-height:72px;font-size:24px;color:#5a9cf8;font-weight:400;">是</div><div class="b" style="left:2094.6px;top:1873px;width:110px;height:48px;background:#f2f9ec;border:2px solid #e4f2da;border-radius:8px"></div><div class="t" style="left:2049.6px;width:200px;text-align:center;top:1861.5px;height:72px;line-height:72px;font-size:24px;color:#7ec050;font-weight:400;">已通过</div><div class="b" style="left:2266.0px;top:1873px;width:86px;height:48px;background:#fcf6ed;border:2px solid #f8ecda;border-radius:8px"></div><div class="t" style="left:2209.0px;width:200px;text-align:center;top:1861.5px;height:72px;line-height:72px;font-size:24px;color:#dca550;font-weight:400;">视频</div><div class="t" style="left:2268.6px;width:400px;text-align:center;top:1856.0px;height:84px;line-height:84px;font-size:28px;color:#606266;font-weight:400;">670</div><div class="t" style="left:2429.6px;width:400px;text-align:center;top:1856.0px;height:84px;line-height:84px;font-size:28px;color:#606266;font-weight:400;">6</div><div class="t" style="left:2589.0px;width:400px;text-align:center;top:1856.0px;height:84px;line-height:84px;font-size:28px;color:#606266;font-weight:400;">1</div><div class="t" style="left:2748.6px;width:400px;text-align:center;top:1856.0px;height:84px;line-height:84px;font-size:28px;color:#606266;font-weight:400;">8</div><div class="t" style="left:3009.6px;width:400px;text-align:center;top:1856.0px;height:84px;line-height:84px;font-size:28px;color:#606266;font-weight:400;">2024-06-28 17:54:10</div><div class="b" style="left:3504px;top:1873px;width:72px;height:48px;background:#5a9cf8;border-radius:6px"></div><svg class="b" style="left:3530.5px;top:1887px;" width="20" height="20" viewBox="0 0 20 20"><path d="M9 1.5H1.5V18.5H18.5V11" stroke="#fff" stroke-width="1.8" fill="none"/><path d="M7.5 12.5L8 9L16 1L19 4L11 12Z" stroke="#fff" stroke-width="1.6" fill="none" stroke-linejoin="round"/></svg><div class="b" style="left:3600px;top:1873px;width:72px;height:48px;background:#e47470;border-radius:6px"></div><svg class="b" style="left:3625.5px;top:1885.5px;" width="21" height="22" viewBox="0 0 21 22"><path d="M0.5 4.5H20.5M7 4.5V1H14V4.5M3 4.5V21H18V4.5M8.5 8V17M12.5 8V17" stroke="#fff" stroke-width="1.8" fill="none"/></svg><div class="b" style="left:440px;top:2146px;width:3348px;height:2px;background:#eceef4"></div><div class="b" style="left:481px;top:2051px;width:28px;height:28px;border:2px solid #dddfe5;border-radius:4px;background:#fff"></div><div class="t" style="left:429.0px;width:400px;text-align:center;top:2023.0px;height:84px;line-height:84px;font-size:28px;color:#606266;font-weight:400;">43</div><div class="t" style="left:590.0px;width:400px;text-align:center;top:2023.0px;height:84px;line-height:84px;font-size:28px;color:#606266;font-weight:400;">头像</div><div class="t" style="left:894px;top:2023.0px;height:84px;line-height:84px;font-size:28px;color:#606266;font-weight:400;">复古…</div><div class="t" style="left:909.0px;width:400px;text-align:center;top:2023.0px;height:84px;line-height:84px;font-size:28px;color:#606266;font-weight:400;">头像</div><svg class="b" style="left:1214px;top:1997px" width="120" height="120" viewBox="0 0 120 120"><defs><clipPath id="th8"><rect width="120" height="120" rx="10"/></clipPath></defs><g clip-path="url(#th8)"><rect width="120" height="120" fill="#1b1c1d"/><path d="M0 120V110Q18 100 34 96L40 120Z M120 120V110Q102 100 88 97L82 120Z" fill="#f1e4d0"/><path d="M34 70H88V104Q84 112 76 120H44Q38 110 34 104Z" fill="#b77e62"/><path d="M60 74L84 68V100Q76 104 68 108Q64 90 60 74Z" fill="#5a4a78"/><path d="M40 96L34 120H46Z M80 100L84 120H74Z" fill="#8a5444"/><ellipse cx="25.6" cy="50.7" rx="6.5" ry="11" fill="#c08468"/><ellipse cx="93.8" cy="50.7" rx="6.5" ry="11" fill="#b97c62"/><path d="M34 24Q34 6 61 6Q88 6 88 26V52Q88 74 61 79Q38 76 35 60Z" fill="#cf9c7c"/><path d="M33 20Q36 50 42 70L36 66Q30 40 32 20Z" fill="#f4e2c8"/><path d="M26 28Q27 0 60 0Q92 0 93 30Q92 40 89 44Q88 24 84 20Q70 14 56 16Q40 16 36 22Q33 28 33 36Q28 34 26 28Z" fill="#1e1a18"/><path d="M30 10Q34 4 40 2Q34 12 33 24Z" fill="#e8dcc8"/><path d="M38 24Q45 20 54 23M68 23Q76 20 84 24" stroke="#2a1a14" stroke-width="2.4" fill="none"/><path d="M38 32Q44 29 51 32M70 32Q76 29 83 32" stroke="#2a2024" stroke-width="2" fill="none"/><path d="M57 44Q60 47 64 44" stroke="#7a4a3a" stroke-width="1.8" fill="none"/><path d="M58 38L56 44" stroke="#f4e0c8" stroke-width="1.2"/><path d="M51 57Q59 54 68 57" stroke="#8a5242" stroke-width="2" fill="none"/><path d="M56 62H62" stroke="#a06a54" stroke-width="1.5"/></g></svg><div class="t" style="left:1336px;top:2067.0px;height:84px;line-height:84px;font-size:28px;color:#606266;font-weight:400;">..</div><div class="t" style="left:1629.0px;width:400px;text-align:center;top:2023.0px;height:84px;line-height:84px;font-size:28px;color:#606266;font-weight:400;">1</div><div class="b" style="left:1957.6px;top:2040px;width:62px;height:48px;background:#eef5fe;border:2px solid #ddebfd;border-radius:8px"></div><div class="t" style="left:1888.6px;width:200px;text-align:center;top:2028.5px;height:72px;line-height:72px;font-size:24px;color:#5a9cf8;font-weight:400;">是</div><div class="b" style="left:2094.6px;top:2040px;width:110px;height:48px;background:#f2f9ec;border:2px solid #e4f2da;border-radius:8px"></div><div class="t" style="left:2049.6px;width:200px;text-align:center;top:2028.5px;height:72px;line-height:72px;font-size:24px;color:#7ec050;font-weight:400;">已通过</div><div class="b" style="left:2266.0px;top:2040px;width:86px;height:48px;background:#eef5fe;border:2px solid #ddebfd;border-radius:8px"></div><div class="t" style="left:2209.0px;width:200px;text-align:center;top:2028.5px;height:72px;line-height:72px;font-size:24px;color:#5a9cf8;font-weight:400;">图文</div><div class="t" style="left:2268.6px;width:400px;text-align:center;top:2023.0px;height:84px;line-height:84px;font-size:28px;color:#606266;font-weight:400;">432</div><div class="t" style="left:2429.6px;width:400px;text-align:center;top:2023.0px;height:84px;line-height:84px;font-size:28px;color:#606266;font-weight:400;">5</div><div class="t" style="left:2589.0px;width:400px;text-align:center;top:2023.0px;height:84px;line-height:84px;font-size:28px;color:#606266;font-weight:400;">1</div><div class="t" style="left:2748.6px;width:400px;text-align:center;top:2023.0px;height:84px;line-height:84px;font-size:28px;color:#606266;font-weight:400;">8</div><div class="t" style="left:3009.6px;width:400px;text-align:center;top:2023.0px;height:84px;line-height:84px;font-size:28px;color:#606266;font-weight:400;">2024-06-28 17:54:10</div><div class="b" style="left:3504px;top:2040px;width:72px;height:48px;background:#5a9cf8;border-radius:6px"></div><svg class="b" style="left:3530.5px;top:2054px;" width="20" height="20" viewBox="0 0 20 20"><path d="M9 1.5H1.5V18.5H18.5V11" stroke="#fff" stroke-width="1.8" fill="none"/><path d="M7.5 12.5L8 9L16 1L19 4L11 12Z" stroke="#fff" stroke-width="1.6" fill="none" stroke-linejoin="round"/></svg><div class="b" style="left:3600px;top:2040px;width:72px;height:48px;background:#e47470;border-radius:6px"></div><svg class="b" style="left:3625.5px;top:2052.5px;" width="21" height="22" viewBox="0 0 21 22"><path d="M0.5 4.5H20.5M7 4.5V1H14V4.5M3 4.5V21H18V4.5M8.5 8V17M12.5 8V17" stroke="#fff" stroke-width="1.8" fill="none"/></svg><div class="b" style="left:3362px;top:732px;width:24px;height:1428px;background:linear-gradient(to right,rgba(0,0,0,0),rgba(0,0,0,.04))"></div><div class="b" style="left:3386px;top:732px;width:2px;height:1428px;background:rgba(0,0,0,.035)"></div></div><div class="b" style="left:3828px;top:244px;width:12px;height:1916px;background:#f1f1f1"></div><div class="b" style="left:3829px;top:244px;width:11px;height:1525px;background:#c1c1c1;border-radius:6px"></div><div class="b" style="left:0px;top:244px;width:400px;height:1916px;background:#334154;z-index:2"></div><div class="b" style="left:400px;top:244px;width:14px;height:1916px;z-index:2;background:linear-gradient(to right,rgba(0,21,41,.16),rgba(0,21,41,.05) 45%,rgba(0,21,41,0))"></div><div class="b" style="left:0;top:244px;width:400px;height:1916px;z-index:3"><div class="b" style="left:59px;top:20px;width:104px;height:60px;background:#e84a4a;border-radius:30px"></div><div class="t" style="left:59px;top:20px;width:104px;height:60px;line-height:60px;text-align:center;font-size:31px;font-weight:700;color:#fff;letter-spacing:-3px;transform:scaleX(0.8);-webkit-text-stroke:1.5px #fff">小红书</div><div class="t" style="left:174px;top:8.0px;height:84px;line-height:84px;font-size:28px;color:#fff;font-weight:600;">红薯管理系统</div><div class="b" style="left:0px;top:660px;width:400px;height:500px;background:#222d3c"></div><div class="t" style="left:101px;top:114.0px;height:84px;line-height:84px;font-size:28px;color:#c1cbd8;font-weight:400;">首页</div><svg class="b" style="left:40px;top:144px;" width="28" height="24" viewBox="0 0 28 24"><path d="M14 1A13 13 0 0 0 1 14V23H27V14A13 13 0 0 0 14 1Z" fill="#c1cbd8"/><circle cx="6" cy="14" r="2" fill="#334154"/><circle cx="9" cy="7.5" r="2" fill="#334154"/><circle cx="14" cy="5" r="2" fill="#334154"/><circle cx="22" cy="14" r="2" fill="#334154"/><circle cx="19" cy="7.5" r="2" fill="#334154"/><path d="M17 8L14 19" stroke="#334154" stroke-width="3"/><circle cx="14" cy="19" r="3" fill="#334154"/></svg><div class="t" style="left:101px;top:226.0px;height:84px;line-height:84px;font-size:28px;color:#c1cbd8;font-weight:400;">数据中心</div><svg class="b" style="left:40px;top:256px;" width="28" height="24" viewBox="0 0 28 24"><path d="M14 1A13 13 0 0 0 1 14V23H27V14A13 13 0 0 0 14 1Z" fill="#c1cbd8"/><circle cx="6" cy="14" r="2" fill="#334154"/><circle cx="9" cy="7.5" r="2" fill="#334154"/><circle cx="14" cy="5" r="2" fill="#334154"/><circle cx="22" cy="14" r="2" fill="#334154"/><circle cx="19" cy="7.5" r="2" fill="#334154"/><path d="M17 8L14 19" stroke="#334154" stroke-width="3"/><circle cx="14" cy="19" r="3" fill="#334154"/></svg><div class="t" style="left:101px;top:338.0px;height:84px;line-height:84px;font-size:28px;color:#c1cbd8;font-weight:400;">门户管理</div><svg class="b" style="left:40px;top:366px;" width="28" height="28" viewBox="0 0 28 28"><circle cx="14" cy="14" r="10.3" stroke="#c1cbd8" stroke-width="6.4" fill="none"/><path d="M14 0V6M14 22V28M0 14H6M22 14H28" stroke="#334154" stroke-width="2.6" transform="rotate(8 14 14)"/></svg><svg class="b" style="left:339px;top:374px;" width="18" height="12" viewBox="0 0 18 12"><path d="M1.5 2L9 9.5L16.5 2" stroke="#c1cbd8" stroke-width="2" fill="none"/></svg><div class="t" style="left:101px;top:450.0px;height:84px;line-height:84px;font-size:28px;color:#c1cbd8;font-weight:400;">会员中心</div><svg class="b" style="left:40px;top:478px;" width="28" height="28" viewBox="0 0 28 28"><circle cx="11" cy="8" r="6.5" fill="#c1cbd8"/><path d="M0 27Q0 15 11 15Q22 15 22 27Z" fill="#c1cbd8"/><path d="M18 2A6 6 0 0 1 18 14Q28 16 28 27H23Q23 17 17 15" fill="#c1cbd8"/></svg><svg class="b" style="left:339px;top:486px;" width="18" height="12" viewBox="0 0 18 12"><path d="M1.5 2L9 9.5L16.5 2" stroke="#c1cbd8" stroke-width="2" fill="none"/></svg><div class="t" style="left:101px;top:562.0px;height:84px;line-height:84px;font-size:28px;color:#f4f4f5;font-weight:400;">笔记管理</div><svg class="b" style="left:38px;top:590px;" width="32" height="28" viewBox="0 0 32 28"><path d="M2 2H10Q16 2 16 6V27Q16 24 10 24H2Z M30 2H22Q16 2 16 6V27Q16 24 22 24H30Z" stroke="#e8ecf1" stroke-width="2.4" fill="none" stroke-linejoin="round"/></svg><svg class="b" style="left:339px;top:598px;" width="18" height="12" viewBox="0 0 18 12"><path d="M1.5 10L9 2.5L16.5 10" stroke="#f4f4f5" stroke-width="2" fill="none"/></svg><div class="t" style="left:101px;top:1174.0px;height:84px;line-height:84px;font-size:28px;color:#c1cbd8;font-weight:400;">消息管理</div><svg class="b" style="left:39px;top:1205px;" width="30" height="22" viewBox="0 0 30 22"><rect x="0" y="0" width="30" height="22" rx="1.5" fill="#c1cbd8"/><path d="M1 2L15 13L29 2" stroke="#334154" stroke-width="2.4" fill="none"/></svg><svg class="b" style="left:339px;top:1210px;" width="18" height="12" viewBox="0 0 18 12"><path d="M1.5 2L9 9.5L16.5 2" stroke="#c1cbd8" stroke-width="2" fill="none"/></svg><div class="t" style="left:101px;top:1286.0px;height:84px;line-height:84px;font-size:28px;color:#c1cbd8;font-weight:400;">系统管理</div><svg class="b" style="left:40px;top:1314px;" width="28" height="28" viewBox="0 0 28 28"><path d="M11.5 0H16.5L17.5 4.2L21.3 6.4L25.4 5.1L27.9 9.4L24.8 12.4V15.6L27.9 18.6L25.4 22.9L21.3 21.6L17.5 23.8L16.5 28H11.5L10.5 23.8L6.7 21.6L2.6 22.9L0.1 18.6L3.2 15.6V12.4L0.1 9.4L2.6 5.1L6.7 6.4L10.5 4.2Z" fill="#c1cbd8"/><circle cx="14" cy="14" r="4.8" fill="#334154"/></svg><svg class="b" style="left:339px;top:1322px;" width="18" height="12" viewBox="0 0 18 12"><path d="M1.5 2L9 9.5L16.5 2" stroke="#c1cbd8" stroke-width="2" fill="none"/></svg><div class="t" style="left:101px;top:1398.0px;height:84px;line-height:84px;font-size:28px;color:#c1cbd8;font-weight:400;">系统工具</div><svg class="b" style="left:40px;top:1427px;" width="28" height="26" viewBox="0 0 28 26"><path d="M1.5 7H26.5V24.5H1.5Z M9.5 7V2H18.5V7 M1.5 14.5H26.5" stroke="#c1cbd8" stroke-width="1.8" fill="none"/><rect x="11.5" y="12" width="5" height="5" stroke="#c1cbd8" stroke-width="1.6" fill="#334154"/></svg><svg class="b" style="left:339px;top:1434px;" width="18" height="12" viewBox="0 0 18 12"><path d="M1.5 2L9 9.5L16.5 2" stroke="#c1cbd8" stroke-width="2" fill="none"/></svg><div class="t" style="left:101px;top:1510.0px;height:84px;line-height:84px;font-size:28px;color:#c1cbd8;font-weight:400;">系统监控</div><svg class="b" style="left:40px;top:1538px;" width="28" height="28" viewBox="0 0 28 28"><path d="M1.5 1.5H26.5V20.5H1.5Z M14 20.5V26.5 M7 26.5H21" stroke="#c1cbd8" stroke-width="1.8" fill="none"/><path d="M5 15L10 8L14 12L21 5" stroke="#c1cbd8" stroke-width="1.8" fill="none"/></svg><svg class="b" style="left:339px;top:1546px;" width="18" height="12" viewBox="0 0 18 12"><path d="M1.5 2L9 9.5L16.5 2" stroke="#c1cbd8" stroke-width="2" fill="none"/></svg><div class="t" style="left:141px;top:668.0px;height:84px;line-height:84px;font-size:28px;color:#5a9cf8;font-weight:400;">笔记管理</div><div class="t" style="left:141px;top:768.0px;height:84px;line-height:84px;font-size:28px;color:#c1cbd8;font-weight:400;">审核管理</div><div class="t" style="left:141px;top:868.0px;height:84px;line-height:84px;font-size:28px;color:#c1cbd8;font-weight:400;">标签管理</div><div class="t" style="left:141px;top:968.0px;height:84px;line-height:84px;font-size:28px;color:#c1cbd8;font-weight:400;">专辑管理</div><div class="t" style="left:141px;top:1068.0px;height:84px;line-height:84px;font-size:28px;color:#c1cbd8;font-weight:400;">专辑元素管理</div><svg class="b" style="left:80px;top:696px;" width="28" height="28" viewBox="0 0 28 28"><path d="M1 1H20V27H3Q1 27 1 25Z" fill="#5a9cf8"/><path d="M5 6H16M5 10H16M5 14H12" stroke="#222d3c" stroke-width="2"/><circle cx="21" cy="21" r="6" fill="#5a9cf8" stroke="#222d3c" stroke-width="2"/><circle cx="21" cy="21" r="2" fill="#222d3c"/></svg><svg class="b" style="left:82px;top:798px;" width="24" height="24" viewBox="0 0 24 24"><rect x="1.2" y="1.2" width="21.6" height="21.6" rx="3" stroke="#c1cbd8" stroke-width="2" fill="none"/><path d="M6 12L10.5 16.5L18 7.5" stroke="#c1cbd8" stroke-width="2" fill="none"/></svg><svg class="b" style="left:80px;top:896px;" width="28" height="28" viewBox="0 0 28 28"><rect x="0" y="0" width="28" height="28" rx="3" fill="#c1cbd8"/><path d="M9 6H19M9 22H19M14 6V22" stroke="#222d3c" stroke-width="3.4"/></svg><svg class="b" style="left:83px;top:997px;" width="22" height="26" viewBox="0 0 22 26"><path d="M8 12V4Q8 1.5 10 1.5Q12 1.5 12 4V11 M12 10Q12 8 14 8Q16 8 16 10V12 M16 11Q16 9.5 18 9.5Q20 9.5 20 11.5V17Q20 24.5 13 24.5Q8 24.5 5 19L2 14Q1 12 3 11.5Q4.5 11 6 13L8 16" stroke="#c1cbd8" stroke-width="1.6" fill="none"/><path d="M5 6A5.5 5.5 0 0 1 15 4" stroke="#c1cbd8" stroke-width="1.4" fill="none"/></svg><svg class="b" style="left:80px;top:1096px;" width="28" height="28" viewBox="0 0 28 28"><circle cx="2.5" cy="3" r="2.5" fill="#c1cbd8"/><circle cx="2.5" cy="14" r="2.5" fill="#c1cbd8"/><circle cx="2.5" cy="25" r="2.5" fill="#c1cbd8"/><rect x="8" y="0.5" width="20" height="5" rx="1" fill="#c1cbd8"/><rect x="8" y="11.5" width="20" height="5" rx="1" fill="#c1cbd8"/><rect x="8" y="22.5" width="20" height="5" rx="1" fill="#c1cbd8"/></svg></div><div class="b" style="left:400px;top:244px;width:3428px;height:100px;background:#fff;box-shadow:0 2px 8px rgba(0,21,41,.08);z-index:1"></div><div class="b" style="left:0;top:0;width:3840px;height:2160px;z-index:1"><svg class="b" style="left:434px;top:279px;" width="32" height="28" viewBox="0 0 32 28"><path d="M0 2H32M0 14H22M0 26H32" stroke="#111" stroke-width="4"/><path d="M32 8V20L25 14Z" fill="#111"/></svg><div class="t" style="left:517px;top:252.0px;height:84px;line-height:84px;font-size:28px;color:#303133;font-weight:400;">首页</div><div class="t" style="left:594px;top:252.0px;height:84px;line-height:84px;font-size:28px;color:#c0c4cc;font-weight:400;">/</div><div class="t" style="left:619px;top:252.0px;height:84px;line-height:84px;font-size:28px;color:#9aa7bc;font-weight:400;">笔记管理</div><div class="t" style="left:753px;top:252.0px;height:84px;line-height:84px;font-size:28px;color:#c0c4cc;font-weight:400;">/</div><div class="t" style="left:777px;top:252.0px;height:84px;line-height:84px;font-size:28px;color:#9aa7bc;font-weight:400;">笔记管理</div><svg class="b" style="left:3297px;top:275px;" width="38" height="38" viewBox="0 0 38 38"><circle cx="15" cy="15" r="11.5" stroke="#5b5e65" stroke-width="5" fill="none"/><path d="M23.5 23.5L34 34" stroke="#5b5e65" stroke-width="5.5" stroke-linecap="round"/></svg><svg class="b" style="left:3366px;top:275px;" width="36" height="36" viewBox="0 0 36 36"><path transform="scale(2.25)" fill="#5b5e65" d="M8 0C3.58 0 0 3.58 0 8c0 3.54 2.29 6.53 5.47 7.59.4.07.55-.17.55-.38 0-.19-.01-.82-.01-1.49-2.01.37-2.53-.49-2.69-.94-.09-.23-.48-.94-.82-1.13-.28-.15-.68-.52-.01-.53.63-.01 1.08.58 1.23.82.72 1.21 1.87.87 2.33.66.07-.52.28-.87.51-1.07-1.78-.2-3.64-.89-3.64-3.95 0-.87.31-1.59.82-2.15-.08-.2-.36-1.02.08-2.12 0 0 .67-.21 2.2.82.64-.18 1.32-.27 2-.27.68 0 1.36.09 2 .27 1.53-1.04 2.2-.82 2.2-.82.44 1.1.16 1.92.08 2.12.51.56.82 1.27.82 2.15 0 3.07-1.87 3.75-3.65 3.95.29.25.54.73.54 1.48 0 1.07-.01 1.93-.01 2.2 0 .21.15.46.55.38A8.013 8.013 0 0016 8c0-4.42-3.58-8-8-8z"/></svg><svg class="b" style="left:3434px;top:275px;" width="36" height="36" viewBox="0 0 36 36"><circle cx="18" cy="18" r="16.3" stroke="#5b5e65" stroke-width="2.8" fill="none"/><path d="M13.2 12.8Q13.2 8 18 8Q22.8 8 22.8 12.2Q22.8 14.8 20 16.6Q18.2 17.8 18.2 20.6V21.5" stroke="#5b5e65" stroke-width="2.7" fill="none"/><rect x="16.6" y="24.5" width="3" height="2.6" fill="#5b5e65"/></svg><svg class="b" style="left:3502px;top:275px;" width="36" height="36" viewBox="0 0 36 36"><path d="M0 0H11.7L7.8 4.3L14.1 10.5L10.3 14.6L4 8.2L0 11.7Z M35.8 0H24.1L28 4.3L21.7 10.5L25.5 14.6L31.8 8.2L35.8 11.7Z M0 35.8H11.7L7.8 31.5L14.1 25.3L10.3 21.2L4 27.6L0 24.1Z M35.8 35.8H24.1L28 31.5L21.7 25.3L25.5 21.2L31.8 27.6L35.8 24.1Z" fill="#5b5e65"/></svg><svg class="b" style="left:3570px;top:275px;" width="36" height="36" viewBox="0 0 36 36"><path d="M10 0H35.8V4.8H25.7V35.8H20.4V4.8H10Z M0.2 15.6H15V20.2H10V35.8H5.3V20.2H0.2Z" fill="#5f6166"/></svg><svg class="b" style="left:3652px;top:254px" width="80" height="80" viewBox="0 0 80 80"><defs><clipPath id="av"><rect width="80" height="80" rx="20"/></clipPath></defs><g clip-path="url(#av)"><rect width="80" height="80" fill="#b4ae88"/><path d="M0 0H80V24Q60 22 48 28Q30 30 0 34Z" fill="#9a9878"/><path d="M40 0Q52 10 62 20L80 22V0Z" fill="#6f7a62"/><path d="M10 0Q16 8 28 10L36 0Z" fill="#7e8668"/><path d="M46 26L80 23V80H46Z" fill="#cbbf92"/><rect x="50" y="21" width="30" height="4.5" fill="#3e4830"/><path d="M52 52L80 40" stroke="#555" stroke-width="0.6" stroke-dasharray="1 1"/><path d="M0 30Q10 26 22 32V60H0Z" fill="#aaa580"/><rect x="0" y="66" width="9" height="5" fill="#8aa0b8"/><ellipse cx="35" cy="31" rx="11.5" ry="15" fill="#d0ab90"/><path d="M24 24Q24 10 35 10Q47 10 47 22Q44 16 37 16Q29 17 26 28Z" fill="#1a1816"/><path d="M28 27Q31 26 33 27M38 27Q41 26 43 27" stroke="#3a2a22" stroke-width="1.2"/><path d="M31 37Q35 36 39 37" stroke="#8a5a4a" stroke-width="1.2"/><rect x="28" y="42" width="16" height="12" fill="#a87c62"/><path d="M9 80Q9 58 26 52Q35 50 46 51Q72 55 76 70V80Z" fill="#111318"/><path d="M44 76L48 72L52 76" stroke="#777" stroke-width="0.6" fill="none"/></g></svg><svg class="b" style="left:3753px;top:312px;" width="14" height="10" viewBox="0 0 14 10"><path d="M0 0H14L7 10Z" fill="#5b5e65"/></svg><div class="b" style="left:400px;top:344px;width:3428px;height:68px;background:#fff;border-bottom:2px solid #d9dce4;box-shadow:0 2px 6px rgba(0,0,0,.12)"></div><div class="b" style="left:400px;top:344px;width:3428px;height:10px;background:linear-gradient(rgba(0,21,41,.05),rgba(0,21,41,0))"></div><div class="b" style="left:430px;top:352px;width:83px;height:52px;background:#fff;border:2px solid #d9dce4"></div><div class="t" style="left:448.5px;top:344.5px;height:72px;line-height:72px;font-size:24px;color:#495060;font-weight:400;">首页</div><div class="b" style="left:524px;top:352px;width:162px;height:52px;background:#fff;border:2px solid #d9dce4"></div><div class="t" style="left:542.5px;top:344.5px;height:72px;line-height:72px;font-size:24px;color:#495060;font-weight:400;">数据中心</div><svg class="b" style="left:649px;top:376px;" width="16" height="16" viewBox="0 0 16 16"><path d="M1 1L15 15M15 1L1 15" stroke="#495060" stroke-width="1.5"/></svg><div class="b" style="left:697px;top:352px;width:161px;height:52px;background:#fff;border:2px solid #d9dce4"></div><div class="t" style="left:715.5px;top:344.5px;height:72px;line-height:72px;font-size:24px;color:#495060;font-weight:400;">评论管理</div><svg class="b" style="left:821px;top:376px;" width="16" height="16" viewBox="0 0 16 16"><path d="M1 1L15 15M15 1L1 15" stroke="#495060" stroke-width="1.5"/></svg><div class="b" style="left:869px;top:352px;width:162px;height:52px;background:#fff;border:2px solid #d9dce4"></div><div class="t" style="left:887.5px;top:344.5px;height:72px;line-height:72px;font-size:24px;color:#495060;font-weight:400;">会员管理</div><svg class="b" style="left:994px;top:376px;" width="16" height="16" viewBox="0 0 16 16"><path d="M1 1L15 15M15 1L1 15" stroke="#495060" stroke-width="1.5"/></svg><div class="b" style="left:1042px;top:352px;width:189px;height:52px;background:#5a9cf8;border:2px solid #5a9cf8"></div><div class="b" style="left:1060px;top:372px;width:16px;height:16px;background:#fff;border-radius:50%"></div><div class="t" style="left:1086.5px;top:344.5px;height:72px;line-height:72px;font-size:24px;color:#fff;font-weight:400;">笔记管理</div><svg class="b" style="left:1194px;top:376px;" width="16" height="16" viewBox="0 0 16 16"><path d="M1 1L15 15M15 1L1 15" stroke="#fff" stroke-width="1.5"/></svg></div></body></html>
